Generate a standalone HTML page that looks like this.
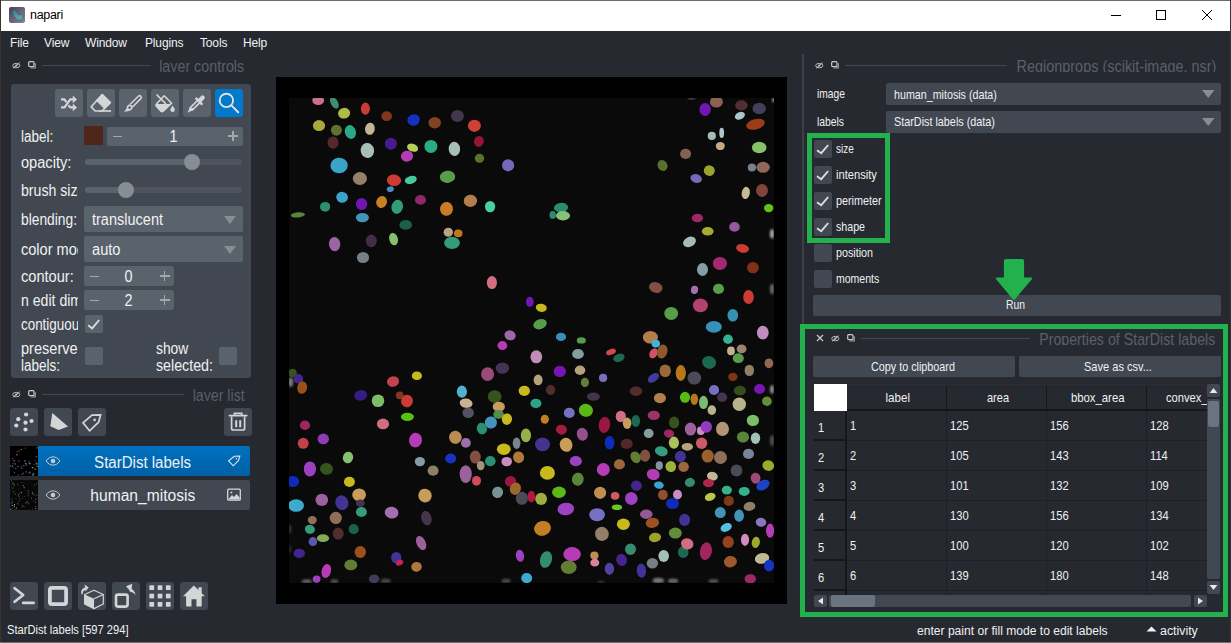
<!DOCTYPE html>
<html><head><meta charset="utf-8"><title>napari</title>
<style>
*{box-sizing:border-box;margin:0;padding:0}
html,body{width:1231px;height:643px;overflow:hidden;background:#262930}
body{font-family:"Liberation Sans",sans-serif;color:#f0f1f2;position:relative}
.abs,.abs>*{position:absolute}
#win div,#win span,#win svg{position:absolute}
.t{white-space:nowrap;line-height:1}
.lbl{font-size:15px;letter-spacing:-0.5px;color:#f0f1f2;left:21px;overflow:hidden;white-space:nowrap;height:20px;line-height:20px}
.btn{background:#414851;border-radius:3px;width:28px;height:28px}
.dk{color:#5f6670;font-size:15.5px;letter-spacing:-0.45px;white-space:nowrap;overflow:hidden;height:15px;line-height:17px;text-align:right}
.ln{height:1px;background:#414851}
.spin{background:#5a626c;border-radius:2px}
.cb{width:18px;height:18px;background:#5a626c;border-radius:2px}
.combo{background:#5a626c;border-radius:2px;font-size:15px;letter-spacing:-0.4px;line-height:26px;height:26px;padding-left:8px;white-space:nowrap}
.s12{font-size:12.5px;letter-spacing:-0.35px;white-space:nowrap;line-height:16px;height:16px}
.rcombo{background:#414851;border-radius:2px;height:22px;line-height:22px;padding-left:7px}
.rbtn{background:#414851;border-radius:2px;height:20px;line-height:20px;text-align:center}
.rcb{width:18px;height:18px;background:#414851;border-radius:2px}
.hd{background:#262930;border-right:2px solid #16181c;border-bottom:2px solid #16181c;height:27px;line-height:25px;text-align:center;width:100px;top:384px}
.rh{background:#262930;border-right:2px solid #16181c;border-bottom:2px solid #16181c;left:814px;width:33px;height:30px;line-height:32px;padding-left:4px}
.cell{height:30px;width:100px;border-right:1px solid #1d1f24;border-bottom:1px solid #1d1f24;line-height:27px;padding-left:4px}
</style></head><body><div id="win" style="left:0;top:0;width:1231px;height:643px;overflow:hidden">

<!-- window frame + title bar -->
<div style="left:0;top:0;width:1231px;height:1px;background:#6b6b6b"></div>
<div style="left:1px;top:1px;width:1229px;height:30px;background:#fff"></div>
<div style="left:0;top:0;width:1px;height:643px;background:#3a342e"></div>
<div style="left:1230px;top:0;width:1px;height:643px;background:#33363b"></div>
<div style="left:0;top:642px;width:1231px;height:1px;background:#6f7174"></div>
<svg style="left:9px;top:7px" width="16" height="16" viewBox="0 0 16 16"><defs><linearGradient id="lg" x1="0" y1="0" x2="1" y2="1"><stop offset="0" stop-color="#4a3f5c"/><stop offset="1" stop-color="#8b829a"/></linearGradient><linearGradient id="lg2" x1="0" y1="0" x2="1" y2="1"><stop offset="0" stop-color="#2e7f86"/><stop offset="1" stop-color="#6fb5b0"/></linearGradient></defs><rect x="0" y="0" width="16" height="16" rx="2" fill="url(#lg)"/><path d="M4.2 3.2 C6.3 2.3 7.8 4.2 8.3 6.2 C8.8 8 10.2 8 11.8 7.6 C13.6 7.4 14.2 9.4 13.4 11.2 C12.4 13.4 9.6 13.8 7.6 12.4 C5.6 11 4.2 8.6 3.6 6.4 C3.2 4.9 3.2 3.7 4.2 3.2Z" fill="url(#lg2)" stroke="#2b5d63" stroke-width="0.6"/></svg>
<div class="t" style="left:30px;top:8px;font-size:12.5px;letter-spacing:-0.3px;color:#000;line-height:15px">napari</div>
<svg style="left:1105px;top:5px" width="120" height="22" viewBox="0 0 120 22" fill="none" stroke="#000" stroke-width="1"><path d="M6 10.5H16"/><rect x="51.5" y="5.5" width="9" height="9"/><path d="M97 5L107 15M107 5L97 15"/></svg>
<!-- menu bar -->
<div class="t mn" style="left:10px;top:36px;font-size:12px;letter-spacing:-0.15px;line-height:14px">File</div>
<div class="t mn" style="left:44px;top:36px;font-size:12px;letter-spacing:-0.15px;line-height:14px">View</div>
<div class="t mn" style="left:85px;top:36px;font-size:12px;letter-spacing:-0.15px;line-height:14px">Window</div>
<div class="t mn" style="left:145px;top:36px;font-size:12px;letter-spacing:-0.15px;line-height:14px">Plugins</div>
<div class="t mn" style="left:200px;top:36px;font-size:12px;letter-spacing:-0.15px;line-height:14px">Tools</div>
<div class="t mn" style="left:243px;top:36px;font-size:12px;letter-spacing:-0.15px;line-height:14px">Help</div>

<svg style="left:12px;top:62px" width="9" height="7" viewBox="0 0 9 7"><ellipse cx="4.3" cy="3.6" rx="3.6" ry="2.2" fill="none" stroke="#b9babd" stroke-width="1"/><circle cx="4.3" cy="3.6" r="1.1" fill="#d0d1d3"/><path d="M1 6.3L7.8 0.6" stroke="#c8c9cb" stroke-width="0.9"/></svg><svg style="left:28px;top:61px" width="9" height="8" viewBox="0 0 9 8"><rect x="0.7" y="0.7" width="5.3" height="5" rx="1" fill="none" stroke="#c8c9cb" stroke-width="1.2"/><path d="M7.3 2.2V7H2.5" stroke="#9b9da1" stroke-width="1.2" fill="none"/></svg>
<div style="left:42px;top:65px;width:109px;height:1px;background:#414851;"></div>
<div style="left:150px;top:56px;width:100px;height:16.2px;overflow:hidden"><div class="t" style="right:5.5px;top:2.5px;font-size:16px;color:#59606b;transform:scaleX(0.893);transform-origin:100% 0;">layer controls</div></div>
<div style="left:11px;top:84px;width:240px;height:294px;background:#414851;border-radius:3px"></div>
<div style="left:55px;top:89px;width:28px;height:28px;background:#5a626c;border-radius:3px"></div>
<div style="left:87px;top:89px;width:28px;height:28px;background:#5a626c;border-radius:3px"></div>
<div style="left:119px;top:89px;width:28px;height:28px;background:#5a626c;border-radius:3px"></div>
<div style="left:151px;top:89px;width:28px;height:28px;background:#5a626c;border-radius:3px"></div>
<div style="left:183px;top:89px;width:28px;height:28px;background:#5a626c;border-radius:3px"></div>
<div style="left:215px;top:89px;width:28px;height:28px;background:#007acc;border-radius:3px"></div>
<svg style="left:55px;top:89px" width="28" height="28" viewBox="0 0 28 28"><g fill="none" stroke="#d4d5d7" stroke-width="2.3" stroke-linejoin="round"><path d="M6 10.4H9.4L11.4 13.2M13.6 16.2L15.2 18.4H19"/><path d="M6 18.4H9.6L15.2 10.4H19"/></g><path d="M17.8 6.6L22 10.4L17.8 14.2Z M17.8 14.6L22 18.4L17.8 22.2Z" fill="#d4d5d7"/></svg>
<svg style="left:87px;top:89px" width="28" height="28" viewBox="0 0 28 28"><path d="M15.3 5.6L23.3 13.6L15 22H8.2L4.2 17.8Z" fill="none" stroke="#d4d5d7" stroke-width="1.7" stroke-linejoin="round"/><path d="M15.3 5.6L23.3 13.6L17.6 19.3L9.6 11.3Z" fill="#d4d5d7" stroke="#d4d5d7" stroke-width="1.2" stroke-linejoin="round"/><path d="M12 22H24" stroke="#d4d5d7" stroke-width="1.7"/></svg>
<svg style="left:119px;top:89px" width="28" height="28" viewBox="0 0 28 28"><path d="M11.2 15.2L19.4 7.2A1.6 1.6 0 0 1 21.8 9.6L13.8 17.8" fill="none" stroke="#d4d5d7" stroke-width="1.6" stroke-linejoin="round"/><path d="M10.8 15.2C8.6 15.4 7.6 17 7.6 19C7.4 20.6 6 21.6 4.6 22.2C7.8 22.8 11.8 22.4 13.4 19.8C14.2 18.4 13.8 17.2 13.6 16.8Z" fill="#d4d5d7"/><circle cx="10.6" cy="18.6" r="1.3" fill="#5a626c"/></svg>
<svg style="left:151px;top:89px" width="28" height="28" viewBox="0 0 28 28"><path d="M6 6L14.5 14.5" stroke="#d4d5d7" stroke-width="1.7" stroke-linecap="round"/><path d="M13.2 6.8L20.6 14.2L12.2 22.2C11.4 22.8 10.6 22.8 10 22.2L5.4 17.2C4.8 16.4 4.8 15.6 5.4 15Z" fill="none" stroke="#d4d5d7" stroke-width="1.6" stroke-linejoin="round"/><path d="M5.2 15H20L12.2 22.4C11.4 22.9 10.6 22.9 10 22.3L5.4 17.3C4.8 16.5 4.8 15.7 5.2 15Z" fill="#d4d5d7"/><path d="M21.6 16.6C22.6 18.2 23.8 19.4 23.8 20.7A2.2 2.2 0 0 1 19.4 20.7C19.4 19.4 20.6 18.2 21.6 16.6Z" fill="#d4d5d7"/></svg>
<svg style="left:183px;top:89px" width="28" height="28" viewBox="0 0 28 28"><path d="M15.2 10.4L17.8 13L9.6 21.2L6.4 22L5.6 22.8L5.4 22.6L6.2 21.6L7 18.6Z" fill="#d4d5d7" stroke="#d4d5d7" stroke-width="1.2" stroke-linejoin="round"/><path d="M15.6 11.6L16.6 12.6L10.2 19H8.2Z" fill="#5a626c"/><path d="M13.4 9.6L18.6 14.8" stroke="#d4d5d7" stroke-width="2.6" stroke-linecap="round"/><path d="M17 11.2L19.6 8.6" stroke="#d4d5d7" stroke-width="4.4" stroke-linecap="round"/></svg>
<svg style="left:215px;top:89px" width="28" height="28" viewBox="0 0 28 28"><circle cx="11.4" cy="11.4" r="6.7" fill="none" stroke="#e4e0dc" stroke-width="1.9"/><path d="M16.4 16.4L23.2 23.2" stroke="#e4e0dc" stroke-width="2" stroke-linecap="round"/></svg>
<div style="left:21px;top:126.69999999999999px;width:57px;height:22px;overflow:hidden"><div class="t" style="left:0.0px;top:2.5px;font-size:16px;color:#f0f1f2;transform:scaleX(0.844);transform-origin:0 0;">label:</div></div>
<div style="left:84px;top:126px;width:19px;height:19px;background:#4f261a;"></div>
<div style="left:107px;top:127px;width:136px;height:19px;background:#5a626c;border-radius:2px"></div>
<div style="left:113px;top:135.5px;width:9px;height:1.3px;background:#a4a8ad;"></div><div style="left:228.0px;top:135.4px;width:10px;height:1.3px;background:#a4a8ad;"></div><div style="left:232.3px;top:131px;width:1.3px;height:10px;background:#a4a8ad;"></div>
<div class="t" style="left:169.1px;top:129.2px;font-size:16px;color:#f0f1f2;transform:scaleX(0.900);transform-origin:50% 0;">1</div>
<div style="left:21px;top:152.8px;width:57px;height:22px;overflow:hidden"><div class="t" style="left:0.0px;top:2.5px;font-size:16px;color:#f0f1f2;transform:scaleX(0.912);transform-origin:0 0;">opacity:</div></div>
<div style="left:85px;top:159px;width:157px;height:6px;background:#4d545e;border-radius:3px"></div><div style="left:85px;top:159px;width:107px;height:6px;background:#5a626c;border-radius:3px"></div><div style="left:184px;top:154px;width:16px;height:16px;background:#868e93;border-radius:8px"></div>
<div style="left:21px;top:180.7px;width:57px;height:22px;overflow:hidden"><div class="t" style="left:0.0px;top:2.5px;font-size:16px;color:#f0f1f2;transform:scaleX(0.883);transform-origin:0 0;">brush size:</div></div>
<div style="left:85px;top:187px;width:157px;height:6px;background:#4d545e;border-radius:3px"></div><div style="left:85px;top:187px;width:41px;height:6px;background:#5a626c;border-radius:3px"></div><div style="left:118px;top:182px;width:16px;height:16px;background:#868e93;border-radius:8px"></div>
<div style="left:21px;top:209.8px;width:57px;height:22px;overflow:hidden"><div class="t" style="left:0.0px;top:2.5px;font-size:16px;color:#f0f1f2;transform:scaleX(0.862);transform-origin:0 0;">blending:</div></div>
<div style="left:84px;top:206px;width:159px;height:26px;background:#5a626c;border-radius:2px"></div>
<div class="t" style="left:92.0px;top:212.3px;font-size:16px;color:#f0f1f2;transform:scaleX(0.907);transform-origin:0 0;">translucent</div>
<div style="left:21px;top:239.8px;width:57px;height:22px;overflow:hidden"><div class="t" style="left:0.0px;top:2.5px;font-size:16px;color:#f0f1f2;transform:scaleX(0.909);transform-origin:0 0;">color mode:</div></div>
<div style="left:84px;top:236px;width:159px;height:26px;background:#5a626c;border-radius:2px"></div>
<div class="t" style="left:92.0px;top:242.3px;font-size:16px;color:#f0f1f2;transform:scaleX(0.915);transform-origin:0 0;">auto</div>
<svg style="left:224px;top:215.5px" width="12" height="8" viewBox="0 0 12 8"><path d="M0 0H12L6.0 8Z" fill="#868e93"/></svg>
<svg style="left:224px;top:245.5px" width="12" height="8" viewBox="0 0 12 8"><path d="M0 0H12L6.0 8Z" fill="#868e93"/></svg>
<div style="left:21px;top:266.8px;width:57px;height:22px;overflow:hidden"><div class="t" style="left:0.0px;top:2.5px;font-size:16px;color:#f0f1f2;transform:scaleX(0.913);transform-origin:0 0;">contour:</div></div>
<div style="left:84px;top:266px;width:90px;height:20px;background:#5a626c;border-radius:2px"></div>
<div style="left:89.5px;top:275.5px;width:9px;height:1.3px;background:#a4a8ad;"></div><div style="left:159.8px;top:275.4px;width:10px;height:1.3px;background:#a4a8ad;"></div><div style="left:164.10000000000002px;top:271px;width:1.3px;height:10px;background:#a4a8ad;"></div>
<div class="t" style="left:123.6px;top:269.3px;font-size:16px;color:#f0f1f2;transform:scaleX(0.900);transform-origin:50% 0;">0</div>
<div style="left:21px;top:290.8px;width:57px;height:22px;overflow:hidden"><div class="t" style="left:0.0px;top:2.5px;font-size:16px;color:#f0f1f2;transform:scaleX(0.881);transform-origin:0 0;">n edit dim:</div></div>
<div style="left:84px;top:290px;width:90px;height:20px;background:#5a626c;border-radius:2px"></div>
<div style="left:89.5px;top:299.5px;width:9px;height:1.3px;background:#a4a8ad;"></div><div style="left:159.8px;top:299.4px;width:10px;height:1.3px;background:#a4a8ad;"></div><div style="left:164.10000000000002px;top:295px;width:1.3px;height:10px;background:#a4a8ad;"></div>
<div class="t" style="left:123.6px;top:293.3px;font-size:16px;color:#f0f1f2;transform:scaleX(0.900);transform-origin:50% 0;">2</div>
<div style="left:21px;top:314.7px;width:57px;height:22px;overflow:hidden"><div class="t" style="left:0.0px;top:2.5px;font-size:16px;color:#f0f1f2;transform:scaleX(0.838);transform-origin:0 0;">contiguous:</div></div>
<div style="left:85px;top:315px;width:18px;height:18px;background:#5a626c;border-radius:2px"></div>
<svg style="left:85px;top:315px" width="18" height="18" viewBox="0 0 18 18"><path d="M3.2 10.2L7.2 13.4L14.2 5" fill="none" stroke="#dcdddf" stroke-width="1.9"/></svg>
<div style="left:21px;top:338.0px;width:57px;height:22px;overflow:hidden"><div class="t" style="left:0.0px;top:2.5px;font-size:16px;color:#f0f1f2;transform:scaleX(0.909);transform-origin:0 0;">preserve</div></div>
<div style="left:21px;top:355.2px;width:57px;height:22px;overflow:hidden"><div class="t" style="left:0.0px;top:2.5px;font-size:16px;color:#f0f1f2;transform:scaleX(0.843);transform-origin:0 0;">labels:</div></div>
<div style="left:85px;top:347px;width:18px;height:18px;background:#5a626c;border-radius:2px"></div>
<div class="t" style="left:156.0px;top:340.5px;font-size:16px;color:#f0f1f2;transform:scaleX(0.865);transform-origin:0 0;">show</div>
<div class="t" style="left:156.0px;top:357.7px;font-size:16px;color:#f0f1f2;transform:scaleX(0.890);transform-origin:0 0;">selected:</div>
<div style="left:219px;top:347px;width:18px;height:18px;background:#5a626c;border-radius:2px"></div>
<svg style="left:12px;top:391px" width="9" height="7" viewBox="0 0 9 7"><ellipse cx="4.3" cy="3.6" rx="3.6" ry="2.2" fill="none" stroke="#b9babd" stroke-width="1"/><circle cx="4.3" cy="3.6" r="1.1" fill="#d0d1d3"/><path d="M1 6.3L7.8 0.6" stroke="#c8c9cb" stroke-width="0.9"/></svg><svg style="left:28px;top:390px" width="9" height="8" viewBox="0 0 9 8"><rect x="0.7" y="0.7" width="5.3" height="5" rx="1" fill="none" stroke="#c8c9cb" stroke-width="1.2"/><path d="M7.3 2.2V7H2.5" stroke="#9b9da1" stroke-width="1.2" fill="none"/></svg>
<div style="left:42px;top:394px;width:142px;height:1px;background:#414851;"></div>
<div style="left:150px;top:385px;width:100px;height:16.2px;overflow:hidden"><div class="t" style="right:5.4px;top:3.0px;font-size:16px;color:#59606b;transform:scaleX(0.886);transform-origin:100% 0;">layer list</div></div>
<div style="left:10px;top:408px;width:28px;height:28px;background:#414851;border-radius:3px"></div>
<div style="left:44px;top:408px;width:28px;height:28px;background:#414851;border-radius:3px"></div>
<div style="left:78px;top:408px;width:28px;height:28px;background:#414851;border-radius:3px"></div>
<div style="left:224px;top:408px;width:28px;height:28px;background:#414851;border-radius:3px"></div>
<svg style="left:10px;top:408px" width="28" height="28" viewBox="0 0 28 28"><circle cx="16.1" cy="6.5" r="2.1" fill="#d4d5d7"/><circle cx="8.3" cy="11.2" r="2.1" fill="#d4d5d7"/><circle cx="21.5" cy="13" r="2.1" fill="#d4d5d7"/><circle cx="15.5" cy="14.7" r="2.1" fill="#d4d5d7"/><circle cx="6.3" cy="17.5" r="2.1" fill="#d4d5d7"/><circle cx="15.5" cy="21.5" r="2.1" fill="#d4d5d7"/></svg>
<svg style="left:44px;top:408px" width="28" height="28" viewBox="0 0 28 28"><path d="M8.3 4.9L24 18.6L14.6 22L6.3 18.3Z" fill="#d4d5d7"/></svg>
<svg style="left:78px;top:408px" width="28" height="28" viewBox="0 0 28 28"><path d="M22.6 7L20.6 14.2L11.6 22.8L5 14.8L14 7.2Z" fill="none" stroke="#d4d5d7" stroke-width="1.7" stroke-linejoin="miter"/><circle cx="16.6" cy="11.9" r="1.3" fill="#d4d5d7"/></svg>
<svg style="left:224px;top:408px" width="28" height="28" viewBox="0 0 28 28"><path d="M5.4 7.6H22.8" stroke="#d4d5d7" stroke-width="1.7" stroke-linecap="round"/><path d="M10.4 7V5.4H17.8V7" stroke="#d4d5d7" stroke-width="1.6" fill="none"/><path d="M7.6 8.5V20.2C7.6 21.4 8.4 22 9.4 22H18.8C19.8 22 20.6 21.4 20.6 20.2V8.5" stroke="#d4d5d7" stroke-width="1.7" fill="none"/><path d="M12.2 12.2V19.2M16.2 12.2V19.2" stroke="#d4d5d7" stroke-width="2"/></svg>
<div style="left:10px;top:446px;width:240px;height:30px;background:linear-gradient(#0071c0,#0060a6);border-radius:2px"></div>
<div style="left:10px;top:480px;width:240px;height:30px;background:#414851;border-radius:2px"></div>
<div style="left:10px;top:446px;width:28px;height:30px;background:#000;"></div>
<div style="left:10px;top:480px;width:28px;height:30px;background:#080808;"></div>
<svg style="left:10px;top:446px" width="28" height="30" viewBox="0 0 28 30"><rect x="8.7" y="4.4" width="1" height="1" fill="#70c050" opacity="0.8"/><rect x="2.5" y="16.9" width="1" height="1" fill="#d05050" opacity="0.8"/><rect x="2.3" y="12.1" width="1" height="1" fill="#50c070" opacity="0.8"/><rect x="14.9" y="1.7" width="1" height="1" fill="#c06090" opacity="0.8"/><rect x="25.6" y="16.7" width="2" height="1" fill="#d05050" opacity="0.8"/><rect x="26.4" y="1.4" width="1.5" height="1" fill="#d08040" opacity="0.8"/><rect x="3.9" y="26.2" width="1" height="1" fill="#50c070" opacity="0.8"/><rect x="15.7" y="18.5" width="1.5" height="1" fill="#50c070" opacity="0.8"/><rect x="14.8" y="17.1" width="2" height="1" fill="#40b0b0" opacity="0.8"/><rect x="12.6" y="26.8" width="1.5" height="1" fill="#b050c0" opacity="0.8"/><rect x="6.7" y="5.2" width="1" height="1" fill="#c06090" opacity="0.8"/><rect x="8.1" y="14.4" width="1.5" height="1" fill="#9060d0" opacity="0.8"/><rect x="7.8" y="28.4" width="1" height="1" fill="#70c050" opacity="0.8"/><rect x="11.3" y="22.0" width="1" height="1" fill="#9060d0" opacity="0.8"/><rect x="11.4" y="27.9" width="1" height="1" fill="#70c050" opacity="0.8"/><rect x="15.5" y="25.4" width="1.5" height="1" fill="#40b0b0" opacity="0.8"/><rect x="18.8" y="17.2" width="2" height="1" fill="#50c070" opacity="0.8"/><rect x="22.7" y="27.4" width="2" height="1" fill="#50c070" opacity="0.8"/><rect x="1.6" y="20.3" width="2" height="1" fill="#b050c0" opacity="0.8"/><rect x="19.3" y="25.7" width="1.5" height="1" fill="#d05050" opacity="0.8"/><rect x="25.4" y="10.3" width="2" height="1" fill="#d05050" opacity="0.8"/><rect x="5.9" y="8.3" width="2" height="1" fill="#d08040" opacity="0.8"/><rect x="24.8" y="14.4" width="1" height="1" fill="#9060d0" opacity="0.8"/><rect x="10.8" y="20.5" width="1.5" height="1" fill="#d08040" opacity="0.8"/><rect x="26.6" y="19.8" width="2" height="1" fill="#c0c040" opacity="0.8"/><rect x="4.1" y="17.5" width="2" height="1" fill="#c06090" opacity="0.8"/><rect x="4.9" y="22.0" width="1.5" height="1" fill="#5080d0" opacity="0.8"/><rect x="18.6" y="14.9" width="1" height="1" fill="#9060d0" opacity="0.8"/><rect x="24.3" y="22.6" width="2" height="1" fill="#d08040" opacity="0.8"/><rect x="10.8" y="3.0" width="1" height="1" fill="#c0c040" opacity="0.8"/><rect x="1.8" y="19.1" width="1" height="1" fill="#50c070" opacity="0.8"/><rect x="0.0" y="19.5" width="1" height="1" fill="#50c070" opacity="0.8"/><rect x="23.6" y="17.8" width="1" height="1" fill="#b050c0" opacity="0.8"/><rect x="25.8" y="17.5" width="2" height="1" fill="#50c070" opacity="0.8"/><rect x="3.1" y="14.2" width="2" height="1" fill="#9060d0" opacity="0.8"/><rect x="13.1" y="19.1" width="1.5" height="1" fill="#9060d0" opacity="0.8"/><rect x="22.4" y="28.3" width="1.5" height="1" fill="#5080d0" opacity="0.8"/><rect x="18.6" y="26.5" width="1.5" height="1" fill="#50c070" opacity="0.8"/><rect x="18.8" y="16.5" width="1" height="1" fill="#70c050" opacity="0.8"/><rect x="14.6" y="14.6" width="1" height="1" fill="#c06090" opacity="0.8"/><rect x="21.9" y="28.6" width="1" height="1" fill="#c0c040" opacity="0.8"/><rect x="22.1" y="21.5" width="1" height="1" fill="#c0c040" opacity="0.8"/><rect x="14.0" y="14.4" width="1.5" height="1" fill="#9060d0" opacity="0.8"/><rect x="7.0" y="20.1" width="1.5" height="1" fill="#9060d0" opacity="0.8"/><rect x="21.8" y="21.0" width="1.5" height="1" fill="#40b0b0" opacity="0.8"/></svg>
<svg style="left:10px;top:480px" width="28" height="30" viewBox="0 0 28 30"><rect x="2.2" y="3.0" width="1" height="1" fill="#888"/><rect x="5.5" y="18.1" width="1" height="1" fill="#333"/><rect x="22.7" y="13.9" width="1" height="1" fill="#555"/><rect x="9.3" y="18.7" width="1" height="1" fill="#555"/><rect x="3.2" y="11.3" width="1" height="1" fill="#666"/><rect x="12.9" y="5.2" width="1" height="1" fill="#888"/><rect x="2.3" y="27.4" width="1" height="1" fill="#555"/><rect x="10.7" y="11.6" width="1" height="1" fill="#555"/><rect x="4.3" y="28.8" width="1" height="1" fill="#444"/><rect x="4.1" y="26.2" width="1" height="1" fill="#555"/><rect x="3.9" y="24.0" width="1" height="1" fill="#aaa"/><rect x="17.7" y="10.2" width="1" height="1" fill="#666"/><rect x="0.6" y="23.2" width="1" height="1" fill="#555"/><rect x="17.5" y="15.3" width="1" height="1" fill="#666"/><rect x="11.7" y="25.3" width="1" height="1" fill="#666"/><rect x="0.8" y="6.2" width="1" height="1" fill="#333"/><rect x="8.8" y="15.8" width="1" height="1" fill="#666"/><rect x="1.6" y="21.5" width="1" height="1" fill="#aaa"/><rect x="17.9" y="23.6" width="1" height="1" fill="#333"/><rect x="11.4" y="26.6" width="1" height="1" fill="#333"/><rect x="3.5" y="4.4" width="1" height="1" fill="#aaa"/><rect x="21.0" y="17.6" width="1" height="1" fill="#666"/><rect x="4.7" y="13.7" width="1" height="1" fill="#555"/><rect x="3.2" y="1.8" width="1" height="1" fill="#333"/><rect x="15.0" y="22.7" width="1" height="1" fill="#444"/><rect x="23.8" y="14.6" width="1" height="1" fill="#444"/><rect x="13.7" y="16.3" width="1" height="1" fill="#444"/><rect x="12.0" y="17.8" width="1" height="1" fill="#333"/><rect x="16.4" y="21.6" width="1" height="1" fill="#aaa"/><rect x="13.7" y="7.2" width="1" height="1" fill="#888"/><rect x="24.9" y="25.9" width="1" height="1" fill="#666"/><rect x="22.7" y="20.6" width="1" height="1" fill="#444"/><rect x="18.1" y="12.4" width="1" height="1" fill="#666"/><rect x="18.1" y="22.7" width="1" height="1" fill="#666"/><rect x="25.4" y="18.7" width="1" height="1" fill="#888"/><rect x="3.9" y="25.6" width="1" height="1" fill="#aaa"/><rect x="5.9" y="27.6" width="1" height="1" fill="#aaa"/><rect x="23.9" y="4.7" width="1" height="1" fill="#666"/><rect x="4.4" y="12.5" width="1" height="1" fill="#333"/><rect x="10.9" y="12.2" width="1" height="1" fill="#888"/><rect x="8.6" y="20.9" width="1" height="1" fill="#444"/><rect x="9.1" y="13.3" width="1" height="1" fill="#555"/><rect x="0.5" y="9.6" width="1" height="1" fill="#333"/><rect x="25.9" y="3.3" width="1" height="1" fill="#666"/><rect x="26.2" y="14.6" width="1" height="1" fill="#666"/><rect x="7.3" y="3.8" width="1" height="1" fill="#555"/><rect x="22.1" y="27.8" width="1" height="1" fill="#333"/><rect x="13.4" y="26.0" width="1" height="1" fill="#666"/><rect x="11.5" y="2.1" width="1" height="1" fill="#555"/><rect x="2.4" y="7.6" width="1" height="1" fill="#666"/><rect x="1.8" y="25.0" width="1" height="1" fill="#aaa"/><rect x="0.3" y="28.8" width="1" height="1" fill="#aaa"/><rect x="25.0" y="21.9" width="1" height="1" fill="#666"/><rect x="25.3" y="28.1" width="1" height="1" fill="#888"/><rect x="1.4" y="18.6" width="1" height="1" fill="#666"/><rect x="7.8" y="14.5" width="1" height="1" fill="#666"/><rect x="7.3" y="23.3" width="1" height="1" fill="#888"/><rect x="1.0" y="0.5" width="1" height="1" fill="#666"/><rect x="13.9" y="7.1" width="1" height="1" fill="#555"/><rect x="22.1" y="12.5" width="1" height="1" fill="#aaa"/></svg>
<svg style="left:45px;top:455px" width="16" height="12" viewBox="0 0 16 12"><path d="M1.2 6C3 3 5.4 1.9 8 1.9C10.6 1.9 13 3 14.8 6C13 9 10.6 10.1 8 10.1C5.4 10.1 3 9 1.2 6Z" fill="none" stroke="#c9cacc" stroke-width="1"/><circle cx="8" cy="6" r="2.3" fill="#c9cacc"/></svg>
<svg style="left:45px;top:489px" width="16" height="12" viewBox="0 0 16 12"><path d="M1.2 6C3 3 5.4 1.9 8 1.9C10.6 1.9 13 3 14.8 6C13 9 10.6 10.1 8 10.1C5.4 10.1 3 9 1.2 6Z" fill="none" stroke="#c9cacc" stroke-width="1"/><circle cx="8" cy="6" r="2.3" fill="#c9cacc"/></svg>
<div class="t" style="left:91.4px;top:454.5px;font-size:16px;color:#f0f1f2;transform:scaleX(0.940);transform-origin:50% 0;">StarDist labels</div>
<div class="t" style="left:89.2px;top:488.3px;font-size:16px;color:#f0f1f2;transform:scaleX(0.976);transform-origin:50% 0;">human_mitosis</div>
<svg style="left:227px;top:454px" width="14" height="14" viewBox="0 0 14 14"><path d="M12.8 2L11.6 6.4L6.2 11.8L1.6 6.8L7.4 2.2Z" fill="none" stroke="#e6e6e6" stroke-width="1.1"/><circle cx="9.4" cy="4.8" r="0.8" fill="#e6e6e6"/></svg>
<svg style="left:227px;top:488px" width="14" height="14" viewBox="0 0 14 14"><rect x="0.7" y="1.2" width="12.6" height="11" rx="1" fill="none" stroke="#d4d5d7" stroke-width="1.3"/><path d="M1.5 11L5 7L7 9L9.6 6L12.6 9.4V11.4H1.5Z" fill="#d4d5d7"/><circle cx="4.4" cy="4.4" r="1" fill="#d4d5d7"/></svg>
<div style="left:10px;top:582px;width:28px;height:28px;background:#414851;border-radius:3px"></div>
<div style="left:44px;top:582px;width:28px;height:28px;background:#414851;border-radius:3px"></div>
<div style="left:78px;top:582px;width:28px;height:28px;background:#414851;border-radius:3px"></div>
<div style="left:112px;top:582px;width:28px;height:28px;background:#414851;border-radius:3px"></div>
<div style="left:146px;top:582px;width:28px;height:28px;background:#414851;border-radius:3px"></div>
<div style="left:180px;top:582px;width:28px;height:28px;background:#414851;border-radius:3px"></div>
<svg style="left:10px;top:582px" width="28" height="28" viewBox="0 0 28 28"><path d="M4.6 6.2L13.2 13L4.6 19.8" fill="none" stroke="#d4d5d7" stroke-width="2.7" stroke-linecap="round" stroke-linejoin="round"/><path d="M13.2 20.9H23.6" stroke="#d4d5d7" stroke-width="2.7" stroke-linecap="round"/></svg>
<svg style="left:44px;top:582px" width="28" height="28" viewBox="0 0 28 28"><rect x="5.9" y="5.9" width="16.2" height="16.2" rx="2" fill="none" stroke="#d4d5d7" stroke-width="3.8"/></svg>
<svg style="left:78px;top:582px" width="28" height="28" viewBox="0 0 28 28"><path d="M16 8.3L25.3 12.5V22L16 26.6L6.6 22V12.5Z" fill="none" stroke="#d4d5d7" stroke-width="1.2" stroke-linejoin="round"/><path d="M6.6 12.5L16 16.8V26.6L6.6 22Z" fill="#d4d5d7"/><path d="M16 16.8L25.3 12.5" stroke="#d4d5d7" stroke-width="1.2"/><path d="M3.6 12.4C2.4 9 4.2 6.2 7.6 5.6L7.8 7.8C5.6 8.4 4.6 10 4.8 12Z" fill="#d4d5d7"/><path d="M6.6 2.6L10.6 5.6L7.6 9.6Z" fill="#d4d5d7"/></svg>
<svg style="left:112px;top:582px" width="28" height="28" viewBox="0 0 28 28"><rect x="4" y="12.6" width="11.6" height="12" rx="2" fill="none" stroke="#d4d5d7" stroke-width="2.6"/><path d="M23.6 13.2C23.2 9.4 21 7 18.4 6.2L17.4 9.2C20 10 22.4 11 23.6 13.2Z" fill="#d4d5d7"/><path d="M14 4.2L20.2 1.8L19.2 10.2Z" fill="#d4d5d7"/></svg>
<svg style="left:146px;top:582px" width="28" height="28" viewBox="0 0 28 28"><rect x="3.4" y="3.3" width="4.7" height="4.7" fill="#d4d5d7"/><rect x="11.7" y="3.3" width="4.7" height="4.7" fill="#d4d5d7"/><rect x="19.9" y="3.3" width="4.7" height="4.7" fill="#d4d5d7"/><rect x="3.4" y="11.7" width="4.7" height="4.7" fill="#d4d5d7"/><rect x="11.7" y="11.7" width="4.7" height="4.7" fill="#d4d5d7"/><rect x="19.9" y="11.7" width="4.7" height="4.7" fill="#d4d5d7"/><rect x="3.4" y="20" width="4.7" height="4.7" fill="#d4d5d7"/><rect x="11.7" y="20" width="4.7" height="4.7" fill="#d4d5d7"/><rect x="19.9" y="20" width="4.7" height="4.7" fill="#d4d5d7"/></svg>
<svg style="left:180px;top:582px" width="28" height="28" viewBox="0 0 28 28"><path d="M13.8 3.4L18.5 8V5.3H21.7V11.2L24.8 14.2H21.7V23.6C21.7 24.2 21.3 24.6 20.8 24.6H16.4V17.2H11.5V24.6H7C6.5 24.6 6.1 24.2 6.1 23.6V14.2H3L13.8 3.4Z" fill="#d4d5d7"/></svg>
<div class="t" style="left:7.4px;top:623.5px;font-size:12px;color:#f0f1f2;transform:scaleX(0.930);transform-origin:0 0;">StarDist labels [597 294]</div>
<div style="left:276px;top:77px;width:511px;height:527px;background:#000;"></div>
<svg style="left:289px;top:98px" width="485" height="485" viewBox="0 0 485 485"><defs><filter id="bl" x="-30%" y="-30%" width="160%" height="160%"><feGaussianBlur stdDeviation="0.9"/></filter></defs><rect width="485" height="485" fill="#0a0a0a"/><g opacity="0.93"><ellipse cx="29.2" cy="2.4" rx="5.9" ry="4.7" fill="#d9789a"/><ellipse cx="45.4" cy="4.9" rx="3.6" ry="6.3" fill="#3f9a7c" transform="rotate(-30 45.4 4.9)"/><ellipse cx="55.1" cy="15.2" rx="6.1" ry="5.3" fill="#bfc94a" transform="rotate(-10 55.1 15.2)"/><ellipse cx="76.4" cy="10.7" rx="4.5" ry="6.1" fill="#d8423c"/><ellipse cx="30.0" cy="27.6" rx="6.1" ry="5.5" fill="#b5b83e"/><ellipse cx="47.4" cy="32.2" rx="5.5" ry="5.5" fill="#677a36"/><ellipse cx="61.4" cy="34.0" rx="5.5" ry="7.1" fill="#2fb58e" transform="rotate(-15 61.4 34.0)"/><ellipse cx="80.9" cy="30.8" rx="4.9" ry="6.1" fill="#cfc6a0" transform="rotate(10 80.9 30.8)"/><ellipse cx="97.7" cy="18.2" rx="5.3" ry="4.9" fill="#8a3c1c"/><ellipse cx="124.6" cy="21.9" rx="6.3" ry="5.7" fill="#1535d0" transform="rotate(-15 124.6 21.9)"/><ellipse cx="145.7" cy="24.7" rx="6.3" ry="5.7" fill="#8a4a22"/><ellipse cx="168.4" cy="18.0" rx="6.5" ry="5.9" fill="#4a3b52"/><ellipse cx="185.4" cy="27.8" rx="6.5" ry="6.1" fill="#de463c"/><ellipse cx="44.0" cy="44.6" rx="5.5" ry="6.1" fill="#5e2a32"/><ellipse cx="78.4" cy="52.5" rx="6.7" ry="7.5" fill="#b5cdc6" transform="rotate(-10 78.4 52.5)"/><ellipse cx="101.9" cy="45.8" rx="6.1" ry="6.1" fill="#4a1f96"/><ellipse cx="123.6" cy="49.7" rx="5.7" ry="3.9" fill="#c9de5c" transform="rotate(20 123.6 49.7)"/><ellipse cx="118.0" cy="58.2" rx="6.1" ry="5.5" fill="#c440c4" transform="rotate(-10 118.0 58.2)"/><ellipse cx="141.9" cy="48.4" rx="6.5" ry="6.5" fill="#2fb892"/><ellipse cx="165.4" cy="50.9" rx="5.7" ry="7.1" fill="#b5cdc6" transform="rotate(-5 165.4 50.9)"/><ellipse cx="189.9" cy="43.4" rx="4.9" ry="5.5" fill="#a0183c" transform="rotate(20 189.9 43.4)"/><ellipse cx="190.5" cy="60.2" rx="4.7" ry="4.5" fill="#5f7a30"/><ellipse cx="219.1" cy="67.3" rx="6.1" ry="6.1" fill="#7f72c8"/><ellipse cx="50.1" cy="67.5" rx="8.7" ry="7.7" fill="#3fb0d8" transform="rotate(-5 50.1 67.5)"/><ellipse cx="70.9" cy="80.5" rx="7.1" ry="6.5" fill="#a08a70"/><ellipse cx="105.0" cy="82.3" rx="7.1" ry="5.7" fill="#dc403a" transform="rotate(5 105.0 82.3)"/><ellipse cx="121.8" cy="81.9" rx="6.1" ry="3.9" fill="#4fd8a8" transform="rotate(-15 121.8 81.9)"/><ellipse cx="101.3" cy="91.2" rx="3.6" ry="2.8" fill="#4a9ccc" transform="rotate(-10 101.3 91.2)"/><ellipse cx="158.5" cy="78.8" rx="7.7" ry="6.1" fill="#5faa50" transform="rotate(-5 158.5 78.8)"/><ellipse cx="53.1" cy="99.3" rx="5.9" ry="5.5" fill="#3fb0d8" transform="rotate(10 53.1 99.3)"/><ellipse cx="36.1" cy="108.8" rx="5.1" ry="4.9" fill="#2f9a7a"/><ellipse cx="72.6" cy="106.0" rx="5.7" ry="6.1" fill="#7a18c0"/><ellipse cx="92.6" cy="104.0" rx="5.3" ry="6.1" fill="#d88a28" transform="rotate(20 92.6 104.0)"/><ellipse cx="108.2" cy="108.8" rx="5.7" ry="7.1" fill="#3aa884" transform="rotate(15 108.2 108.8)"/><ellipse cx="131.5" cy="101.9" rx="5.5" ry="4.9" fill="#9a2c70"/><ellipse cx="157.5" cy="110.9" rx="6.5" ry="6.9" fill="#d8862a" transform="rotate(10 157.5 110.9)"/><ellipse cx="181.4" cy="102.8" rx="6.7" ry="6.1" fill="#c08850" transform="rotate(-10 181.4 102.8)"/><ellipse cx="201.1" cy="108.6" rx="5.1" ry="5.7" fill="#4fe0b0"/><ellipse cx="8.9" cy="116.9" rx="7.1" ry="2.6" fill="#5f9040" transform="rotate(-5 8.9 116.9)"/><ellipse cx="73.4" cy="119.6" rx="6.5" ry="4.7" fill="#4aa0c8"/><ellipse cx="427.4" cy="3.9" rx="6.5" ry="5.7" fill="#9a6858"/><ellipse cx="416.1" cy="11.4" rx="5.7" ry="6.5" fill="#7a18c0"/><ellipse cx="452.4" cy="7.3" rx="6.3" ry="5.1" fill="#5a3038"/><ellipse cx="470.2" cy="10.5" rx="6.7" ry="5.7" fill="#4a4560"/><ellipse cx="450.9" cy="17.8" rx="5.3" ry="3.6" fill="#b8d4d8" transform="rotate(-25 450.9 17.8)"/><ellipse cx="466.5" cy="26.3" rx="9.5" ry="5.1" fill="#a8401c" transform="rotate(-15 466.5 26.3)"/><ellipse cx="432.7" cy="34.9" rx="2.4" ry="5.1" fill="#c0d4d8"/><ellipse cx="422.8" cy="37.9" rx="4.1" ry="4.1" fill="#b0ccc8"/><ellipse cx="431.3" cy="48.0" rx="4.5" ry="4.1" fill="#d8b490"/><ellipse cx="396.6" cy="55.9" rx="5.5" ry="5.1" fill="#906858"/><ellipse cx="470.2" cy="49.5" rx="7.3" ry="5.7" fill="#8ed070"/><ellipse cx="373.5" cy="67.5" rx="4.9" ry="5.7" fill="#5f7a30" transform="rotate(-25 373.5 67.5)"/><ellipse cx="420.3" cy="72.6" rx="5.5" ry="5.3" fill="#a8b030" transform="rotate(10 420.3 72.6)"/><ellipse cx="407.2" cy="80.5" rx="5.9" ry="4.3" fill="#7f72c8" transform="rotate(15 407.2 80.5)"/><ellipse cx="462.9" cy="69.5" rx="4.1" ry="4.1" fill="#808a98"/><ellipse cx="474.1" cy="69.3" rx="6.7" ry="5.5" fill="#9a7060"/><ellipse cx="473.0" cy="92.4" rx="5.9" ry="6.5" fill="#8a4a40"/><ellipse cx="456.8" cy="94.9" rx="4.1" ry="6.1" fill="#d8c8a0" transform="rotate(10 456.8 94.9)"/><ellipse cx="479.7" cy="110.1" rx="4.7" ry="4.1" fill="#6ad020"/><ellipse cx="272.0" cy="109.6" rx="7.1" ry="4.7" fill="#2f9878" transform="rotate(-5 272.0 109.6)"/><ellipse cx="274.0" cy="117.8" rx="7.1" ry="4.7" fill="#90d080"/><ellipse cx="263.7" cy="116.9" rx="3.2" ry="3.9" fill="#2f9878"/><ellipse cx="408.4" cy="120.0" rx="5.7" ry="4.3" fill="#a82c70"/><ellipse cx="402.5" cy="0.2" rx="3.6" ry="1.0" fill="#777777" filter="url(#bl)"/><ellipse cx="484.6" cy="2.0" rx="1.6" ry="2.8" fill="#999999" filter="url(#bl)"/><ellipse cx="116.7" cy="126.9" rx="6.3" ry="4.9" fill="#1f6850"/><ellipse cx="45.6" cy="146.1" rx="5.7" ry="7.1" fill="#a86cb0" transform="rotate(-5 45.6 146.1)"/><ellipse cx="82.3" cy="142.9" rx="5.5" ry="6.3" fill="#4a3050"/><ellipse cx="104.6" cy="141.1" rx="4.3" ry="6.3" fill="#90d070" transform="rotate(-15 104.6 141.1)"/><ellipse cx="74.0" cy="159.5" rx="6.1" ry="5.5" fill="#808890"/><ellipse cx="159.3" cy="134.2" rx="4.7" ry="4.5" fill="#c8b090"/><ellipse cx="169.2" cy="135.4" rx="4.3" ry="3.8" fill="#d08020"/><ellipse cx="163.0" cy="144.9" rx="7.9" ry="6.1" fill="#3aa884"/><ellipse cx="202.9" cy="184.6" rx="5.1" ry="6.5" fill="#e0788c"/><ellipse cx="240.8" cy="203.9" rx="3.9" ry="5.1" fill="#7a18c0"/><ellipse cx="221.1" cy="237.3" rx="5.7" ry="4.9" fill="#a870b8" transform="rotate(20 221.1 237.3)"/><ellipse cx="445.5" cy="128.9" rx="5.3" ry="4.9" fill="#a060a8"/><ellipse cx="418.7" cy="133.3" rx="5.9" ry="4.3" fill="#b0b83a"/><ellipse cx="400.5" cy="143.9" rx="6.7" ry="4.9" fill="#b0ccc4" transform="rotate(-25 400.5 143.9)"/><ellipse cx="453.6" cy="150.4" rx="6.5" ry="4.3" fill="#dc403a" transform="rotate(10 453.6 150.4)"/><ellipse cx="430.9" cy="165.4" rx="7.1" ry="6.5" fill="#b02c78"/><ellipse cx="413.5" cy="171.5" rx="5.5" ry="6.5" fill="#90aab0"/><ellipse cx="463.9" cy="169.6" rx="5.9" ry="5.7" fill="#8a3418"/><ellipse cx="366.8" cy="189.5" rx="6.9" ry="5.3" fill="#8a5848" transform="rotate(15 366.8 189.5)"/><ellipse cx="405.5" cy="191.9" rx="3.6" ry="4.1" fill="#b078c0" transform="rotate(10 405.5 191.9)"/><ellipse cx="429.5" cy="190.9" rx="5.5" ry="5.1" fill="#5faa50"/><ellipse cx="459.5" cy="199.0" rx="5.3" ry="7.1" fill="#dc403a"/><ellipse cx="411.4" cy="207.3" rx="7.5" ry="6.9" fill="#c04878"/><ellipse cx="382.2" cy="215.4" rx="6.9" ry="6.5" fill="#5faa50"/><ellipse cx="443.8" cy="217.3" rx="5.3" ry="6.3" fill="#3a9cc0"/><ellipse cx="424.8" cy="228.8" rx="8.1" ry="5.9" fill="#3a9cc8"/><ellipse cx="473.8" cy="234.7" rx="5.9" ry="6.9" fill="#d098d0"/><ellipse cx="361.4" cy="239.3" rx="7.5" ry="6.3" fill="#c08850"/><ellipse cx="439.0" cy="241.2" rx="4.9" ry="4.7" fill="#3ac098"/><ellipse cx="252.3" cy="209.8" rx="5.5" ry="4.1" fill="#d8c820" transform="rotate(10 252.3 209.8)"/><ellipse cx="251.1" cy="226.2" rx="6.9" ry="4.9" fill="#5faa50" transform="rotate(-20 251.1 226.2)"/><ellipse cx="272.0" cy="238.9" rx="5.1" ry="4.1" fill="#3a9cc8"/><ellipse cx="292.3" cy="242.4" rx="4.5" ry="3.2" fill="#5faa50"/><ellipse cx="483.0" cy="135.8" rx="2.0" ry="4.9" fill="#b8b8b8" filter="url(#bl)"/><ellipse cx="483.0" cy="191.1" rx="2.0" ry="5.5" fill="#777777" filter="url(#bl)"/><ellipse cx="213.4" cy="247.6" rx="4.9" ry="4.5" fill="#c440c4"/><ellipse cx="3.6" cy="275.0" rx="4.3" ry="4.3" fill="#3a5a20"/><ellipse cx="9.5" cy="280.9" rx="4.7" ry="4.9" fill="#4a2898"/><ellipse cx="1.6" cy="284.1" rx="2.8" ry="4.7" fill="#808080" filter="url(#bl)"/><ellipse cx="13.2" cy="289.6" rx="4.9" ry="6.3" fill="#a85820" transform="rotate(10 13.2 289.6)"/><ellipse cx="213.4" cy="270.1" rx="6.7" ry="5.7" fill="#4a3858"/><ellipse cx="198.6" cy="276.2" rx="6.5" ry="6.9" fill="#a85080"/><ellipse cx="104.0" cy="283.5" rx="6.1" ry="5.3" fill="#d04858" transform="rotate(-15 104.0 283.5)"/><ellipse cx="127.9" cy="277.8" rx="5.1" ry="4.3" fill="#d8c820"/><ellipse cx="71.7" cy="297.3" rx="6.5" ry="5.3" fill="#3a2090" transform="rotate(-15 71.7 297.3)"/><ellipse cx="89.0" cy="302.8" rx="6.3" ry="6.3" fill="#88cc70"/><ellipse cx="110.7" cy="297.3" rx="3.9" ry="3.9" fill="#8a4020"/><ellipse cx="118.0" cy="303.0" rx="5.9" ry="6.3" fill="#dc403a" transform="rotate(15 118.0 303.0)"/><ellipse cx="118.4" cy="318.8" rx="6.5" ry="4.1" fill="#60d010"/><ellipse cx="94.0" cy="325.9" rx="6.1" ry="5.3" fill="#e0788c"/><ellipse cx="16.0" cy="327.3" rx="5.1" ry="4.7" fill="#a82c68"/><ellipse cx="34.3" cy="340.9" rx="5.7" ry="5.3" fill="#9840c8"/><ellipse cx="14.2" cy="345.3" rx="5.5" ry="5.5" fill="#d04850"/><ellipse cx="126.5" cy="342.1" rx="6.5" ry="7.3" fill="#c440c4" transform="rotate(10 126.5 342.1)"/><ellipse cx="59.0" cy="359.5" rx="5.1" ry="5.9" fill="#90d078" transform="rotate(15 59.0 359.5)"/><ellipse cx="172.9" cy="293.7" rx="5.1" ry="6.1" fill="#58c0e0"/><ellipse cx="177.1" cy="305.2" rx="6.5" ry="4.7" fill="#d8c0a0" transform="rotate(10 177.1 305.2)"/><ellipse cx="179.2" cy="314.7" rx="5.7" ry="5.3" fill="#585868"/><ellipse cx="205.7" cy="298.5" rx="6.9" ry="6.3" fill="#3a5a20"/><ellipse cx="209.8" cy="308.7" rx="6.1" ry="4.9" fill="#d8a868"/><ellipse cx="209.6" cy="316.4" rx="5.3" ry="4.3" fill="#5a9850"/><ellipse cx="235.3" cy="292.8" rx="5.7" ry="5.1" fill="#d8c820"/><ellipse cx="217.9" cy="321.2" rx="5.1" ry="5.7" fill="#d8c820" transform="rotate(10 217.9 321.2)"/><ellipse cx="201.9" cy="324.5" rx="6.1" ry="6.1" fill="#48a0c8" transform="rotate(10 201.9 324.5)"/><ellipse cx="192.9" cy="330.5" rx="5.1" ry="5.9" fill="#2f9a7c" transform="rotate(-15 192.9 330.5)"/><ellipse cx="236.9" cy="337.4" rx="5.1" ry="6.9" fill="#a0c050"/><ellipse cx="227.6" cy="345.3" rx="3.9" ry="5.7" fill="#809098"/><ellipse cx="166.4" cy="339.3" rx="6.3" ry="6.5" fill="#c89858" transform="rotate(-20 166.4 339.3)"/><ellipse cx="176.9" cy="344.9" rx="4.9" ry="4.9" fill="#a878b8"/><ellipse cx="214.8" cy="351.2" rx="6.9" ry="5.7" fill="#d8c820"/><ellipse cx="186.3" cy="359.1" rx="5.5" ry="6.5" fill="#8a5848"/><ellipse cx="161.7" cy="360.5" rx="5.5" ry="4.9" fill="#1838d0"/><ellipse cx="130.9" cy="363.6" rx="5.1" ry="4.7" fill="#90a8b0"/><ellipse cx="229.6" cy="359.3" rx="5.5" ry="5.9" fill="#c08040" transform="rotate(-10 229.6 359.3)"/><ellipse cx="217.7" cy="363.6" rx="5.3" ry="4.7" fill="#d898d0"/><ellipse cx="201.3" cy="363.2" rx="5.3" ry="5.1" fill="#2f9a7c"/><ellipse cx="247.3" cy="258.8" rx="5.9" ry="6.5" fill="#d098c8"/><ellipse cx="289.0" cy="256.0" rx="5.9" ry="5.1" fill="#90a8a8"/><ellipse cx="322.0" cy="253.9" rx="5.1" ry="2.8" fill="#e05050" transform="rotate(-20 322.0 253.9)"/><ellipse cx="329.9" cy="259.8" rx="5.9" ry="3.9" fill="#1f7058" transform="rotate(-20 329.9 259.8)"/><ellipse cx="366.8" cy="245.6" rx="4.3" ry="3.9" fill="#48c0e8"/><ellipse cx="364.6" cy="255.3" rx="3.9" ry="5.3" fill="#e05870" transform="rotate(30 364.6 255.3)"/><ellipse cx="373.3" cy="253.5" rx="5.1" ry="7.1" fill="#9a6030" transform="rotate(15 373.3 253.5)"/><ellipse cx="442.0" cy="252.9" rx="3.9" ry="4.3" fill="#d0c098"/><ellipse cx="452.6" cy="250.9" rx="4.9" ry="4.3" fill="#a89078"/><ellipse cx="449.3" cy="260.2" rx="5.5" ry="4.9" fill="#5faa50"/><ellipse cx="420.1" cy="264.3" rx="7.1" ry="6.3" fill="#1f7058" transform="rotate(20 420.1 264.3)"/><ellipse cx="479.9" cy="265.3" rx="4.3" ry="4.9" fill="#9a7058"/><ellipse cx="270.8" cy="273.4" rx="6.1" ry="5.7" fill="#8018c0"/><ellipse cx="291.0" cy="272.2" rx="5.3" ry="4.7" fill="#c0b088"/><ellipse cx="249.1" cy="281.9" rx="4.5" ry="5.3" fill="#c0b088"/><ellipse cx="314.1" cy="279.9" rx="4.1" ry="4.1" fill="#8078d0"/><ellipse cx="295.9" cy="284.5" rx="4.1" ry="4.7" fill="#6a8840"/><ellipse cx="376.2" cy="272.8" rx="5.7" ry="6.3" fill="#a87040"/><ellipse cx="391.8" cy="275.0" rx="5.1" ry="7.9" fill="#c88020"/><ellipse cx="364.4" cy="279.9" rx="6.3" ry="3.9" fill="#4840a8" transform="rotate(-35 364.4 279.9)"/><ellipse cx="405.3" cy="280.1" rx="6.9" ry="6.5" fill="#505060"/><ellipse cx="460.3" cy="272.4" rx="4.7" ry="5.7" fill="#a08870"/><ellipse cx="443.9" cy="278.9" rx="4.7" ry="4.1" fill="#8a3818"/><ellipse cx="261.6" cy="292.0" rx="4.7" ry="5.1" fill="#5a3030"/><ellipse cx="347.0" cy="293.3" rx="6.3" ry="4.7" fill="#5a3030"/><ellipse cx="304.4" cy="298.7" rx="6.5" ry="4.1" fill="#483850"/><ellipse cx="425.0" cy="292.0" rx="5.1" ry="5.1" fill="#8078d0"/><ellipse cx="470.6" cy="291.0" rx="5.5" ry="4.9" fill="#8018c0"/><ellipse cx="450.9" cy="292.6" rx="6.1" ry="4.9" fill="#3a5420"/><ellipse cx="433.1" cy="299.3" rx="5.1" ry="4.7" fill="#4a3858"/><ellipse cx="370.9" cy="300.1" rx="6.1" ry="5.1" fill="#c08850"/><ellipse cx="396.0" cy="299.3" rx="5.1" ry="5.5" fill="#60c818"/><ellipse cx="405.3" cy="301.2" rx="3.8" ry="5.7" fill="#c88020"/><ellipse cx="414.5" cy="304.4" rx="4.5" ry="6.7" fill="#88c878"/><ellipse cx="477.9" cy="303.2" rx="4.9" ry="4.7" fill="#6a9840" transform="rotate(20 477.9 303.2)"/><ellipse cx="450.3" cy="306.2" rx="6.7" ry="6.7" fill="#c8c098"/><ellipse cx="246.9" cy="305.4" rx="5.5" ry="4.7" fill="#2fb090"/><ellipse cx="296.9" cy="312.3" rx="7.1" ry="6.5" fill="#60c818" transform="rotate(10 296.9 312.3)"/><ellipse cx="280.3" cy="314.9" rx="5.5" ry="5.1" fill="#8078d0"/><ellipse cx="422.8" cy="312.1" rx="4.3" ry="4.9" fill="#c8c098"/><ellipse cx="255.8" cy="321.2" rx="4.1" ry="4.5" fill="#d08828"/><ellipse cx="331.8" cy="318.4" rx="5.1" ry="5.7" fill="#e07890"/><ellipse cx="364.8" cy="317.4" rx="6.1" ry="4.7" fill="#a83870"/><ellipse cx="338.1" cy="325.3" rx="4.3" ry="5.7" fill="#d8a868"/><ellipse cx="346.8" cy="323.0" rx="4.3" ry="5.9" fill="#1f7058"/><ellipse cx="315.4" cy="326.9" rx="5.7" ry="8.1" fill="#a81848" transform="rotate(10 315.4 326.9)"/><ellipse cx="385.1" cy="324.5" rx="5.1" ry="5.9" fill="#3a5a20"/><ellipse cx="463.9" cy="322.4" rx="6.1" ry="5.7" fill="#88cc70"/><ellipse cx="272.4" cy="331.6" rx="5.5" ry="4.9" fill="#b02048" transform="rotate(10 272.4 331.6)"/><ellipse cx="293.3" cy="336.2" rx="5.5" ry="6.5" fill="#a05898" transform="rotate(-15 293.3 336.2)"/><ellipse cx="401.5" cy="331.1" rx="5.7" ry="6.5" fill="#a868a8"/><ellipse cx="411.8" cy="332.8" rx="3.9" ry="4.3" fill="#e098d0"/><ellipse cx="417.3" cy="328.9" rx="5.7" ry="5.9" fill="#a040d0"/><ellipse cx="433.5" cy="330.9" rx="6.5" ry="7.1" fill="#c0a080"/><ellipse cx="359.7" cy="335.4" rx="4.9" ry="4.7" fill="#90a8a8"/><ellipse cx="380.0" cy="335.6" rx="5.1" ry="4.1" fill="#a82c68" transform="rotate(10 380.0 335.6)"/><ellipse cx="454.0" cy="339.1" rx="6.1" ry="5.5" fill="#5f9040"/><ellipse cx="466.5" cy="340.3" rx="4.7" ry="5.7" fill="#b0d0c8"/><ellipse cx="253.5" cy="346.3" rx="7.5" ry="6.9" fill="#4a3898"/><ellipse cx="277.1" cy="346.8" rx="6.3" ry="7.1" fill="#d8a860" transform="rotate(-15 277.1 346.8)"/><ellipse cx="320.6" cy="344.7" rx="4.9" ry="6.7" fill="#1030c8"/><ellipse cx="337.7" cy="345.9" rx="6.1" ry="5.1" fill="#5a2c30"/><ellipse cx="384.9" cy="344.7" rx="5.1" ry="6.1" fill="#b8d060"/><ellipse cx="412.6" cy="345.3" rx="5.7" ry="5.7" fill="#e06070"/><ellipse cx="398.3" cy="348.8" rx="5.7" ry="3.9" fill="#c8b088"/><ellipse cx="372.3" cy="353.2" rx="6.5" ry="4.9" fill="#3aa888" transform="rotate(15 372.3 353.2)"/><ellipse cx="391.4" cy="358.5" rx="5.5" ry="5.7" fill="#4838a0"/><ellipse cx="356.1" cy="357.7" rx="5.1" ry="6.1" fill="#8a5848"/><ellipse cx="346.6" cy="359.3" rx="4.9" ry="6.1" fill="#6a8838" transform="rotate(-30 346.6 359.3)"/><ellipse cx="418.7" cy="358.1" rx="6.1" ry="6.5" fill="#a86830"/><ellipse cx="431.5" cy="359.5" rx="6.5" ry="6.5" fill="#9a7860"/><ellipse cx="459.5" cy="355.9" rx="5.5" ry="5.1" fill="#8090a0"/><ellipse cx="286.8" cy="363.2" rx="6.1" ry="5.1" fill="#a848d0"/><ellipse cx="330.4" cy="366.4" rx="5.5" ry="5.1" fill="#a87040"/><ellipse cx="483.0" cy="291.4" rx="2.0" ry="4.3" fill="#999999" filter="url(#bl)"/><ellipse cx="483.0" cy="342.7" rx="2.0" ry="5.9" fill="#5a5a5a" filter="url(#bl)"/><ellipse cx="20.9" cy="370.9" rx="6.1" ry="7.5" fill="#a848d0"/><ellipse cx="37.5" cy="370.9" rx="6.5" ry="5.9" fill="#3a5a20" transform="rotate(15 37.5 370.9)"/><ellipse cx="3.9" cy="383.4" rx="6.3" ry="5.5" fill="#1030c8"/><ellipse cx="60.4" cy="383.8" rx="5.5" ry="5.1" fill="#d8c820"/><ellipse cx="70.1" cy="396.8" rx="6.9" ry="6.3" fill="#d8a860"/><ellipse cx="32.8" cy="401.9" rx="6.3" ry="6.1" fill="#a868a8"/><ellipse cx="71.3" cy="405.1" rx="4.3" ry="3.6" fill="#4a3858"/><ellipse cx="52.9" cy="404.7" rx="6.5" ry="7.5" fill="#4838a0" transform="rotate(-20 52.9 404.7)"/><ellipse cx="7.1" cy="407.5" rx="7.9" ry="6.3" fill="#40b8e0"/><ellipse cx="72.4" cy="414.0" rx="5.5" ry="4.9" fill="#3aa888"/><ellipse cx="102.6" cy="414.6" rx="6.9" ry="5.9" fill="#b078c0" transform="rotate(10 102.6 414.6)"/><ellipse cx="23.3" cy="422.1" rx="4.5" ry="4.1" fill="#9a7860"/><ellipse cx="46.8" cy="419.9" rx="6.1" ry="6.1" fill="#9a7860" transform="rotate(-10 46.8 419.9)"/><ellipse cx="20.9" cy="431.3" rx="5.1" ry="4.5" fill="#3aa888" transform="rotate(15 20.9 431.3)"/><ellipse cx="64.7" cy="431.1" rx="5.1" ry="5.1" fill="#1f6850"/><ellipse cx="49.2" cy="435.7" rx="5.5" ry="6.1" fill="#5a3030"/><ellipse cx="34.0" cy="440.2" rx="6.1" ry="3.9" fill="#90b860"/><ellipse cx="23.9" cy="443.6" rx="4.3" ry="4.5" fill="#6060c0"/><ellipse cx="10.3" cy="455.4" rx="5.7" ry="4.7" fill="#4a2898"/><ellipse cx="71.3" cy="454.0" rx="5.7" ry="6.1" fill="#a85820"/><ellipse cx="61.8" cy="466.9" rx="6.5" ry="5.3" fill="#6a8838"/><ellipse cx="37.3" cy="473.0" rx="4.7" ry="7.1" fill="#c440c4" transform="rotate(15 37.3 473.0)"/><ellipse cx="27.6" cy="481.1" rx="3.9" ry="3.6" fill="#a848d0"/><ellipse cx="85.1" cy="480.9" rx="5.3" ry="4.3" fill="#484058"/><ellipse cx="144.1" cy="372.7" rx="5.5" ry="5.1" fill="#9a8870"/><ellipse cx="176.7" cy="376.1" rx="6.1" ry="8.9" fill="#a868a8"/><ellipse cx="187.5" cy="382.8" rx="4.5" ry="4.9" fill="#e05060"/><ellipse cx="191.7" cy="367.6" rx="3.9" ry="4.7" fill="#b0a088"/><ellipse cx="136.0" cy="397.6" rx="6.7" ry="6.9" fill="#d8a860" transform="rotate(-20 136.0 397.6)"/><ellipse cx="208.6" cy="394.4" rx="5.5" ry="5.7" fill="#80a0a0" transform="rotate(10 208.6 394.4)"/><ellipse cx="221.5" cy="383.4" rx="5.7" ry="5.3" fill="#a81848" transform="rotate(-20 221.5 383.4)"/><ellipse cx="226.4" cy="390.7" rx="5.5" ry="6.3" fill="#a87030" transform="rotate(20 226.4 390.7)"/><ellipse cx="232.9" cy="400.3" rx="6.1" ry="6.5" fill="#505060"/><ellipse cx="137.4" cy="420.1" rx="5.1" ry="7.3" fill="#4a3a50" transform="rotate(-15 137.4 420.1)"/><ellipse cx="132.1" cy="445.0" rx="4.5" ry="7.5" fill="#a868a8" transform="rotate(-25 132.1 445.0)"/><ellipse cx="107.2" cy="459.6" rx="5.1" ry="5.7" fill="#4838a0"/><ellipse cx="110.5" cy="464.7" rx="3.9" ry="2.8" fill="#d02858" transform="rotate(-20 110.5 464.7)"/><ellipse cx="127.5" cy="468.8" rx="5.3" ry="4.9" fill="#c08040" transform="rotate(-10 127.5 468.8)"/><ellipse cx="231.0" cy="457.8" rx="4.1" ry="6.1" fill="#a848d0" transform="rotate(-10 231.0 457.8)"/><ellipse cx="237.7" cy="480.1" rx="5.5" ry="5.1" fill="#40b8e0"/><ellipse cx="17.8" cy="483.3" rx="5.5" ry="2.0" fill="#6a6a6a" filter="url(#bl)"/><ellipse cx="45.4" cy="483.3" rx="3.9" ry="2.0" fill="#5a5a5a" filter="url(#bl)"/><ellipse cx="96.7" cy="482.9" rx="5.1" ry="2.4" fill="#4a4a4a" filter="url(#bl)"/><ellipse cx="217.1" cy="482.9" rx="4.7" ry="2.4" fill="#4a4a4a" filter="url(#bl)"/><ellipse cx="0.8" cy="431.1" rx="1.6" ry="4.9" fill="#3a3a3a" filter="url(#bl)"/><ellipse cx="0.8" cy="450.9" rx="1.6" ry="3.9" fill="#2c2c2c" filter="url(#bl)"/><ellipse cx="258.4" cy="374.9" rx="7.5" ry="6.9" fill="#d8c820"/><ellipse cx="314.3" cy="371.5" rx="6.5" ry="6.5" fill="#c440c4"/><ellipse cx="370.3" cy="367.6" rx="3.6" ry="4.3" fill="#90a0a8"/><ellipse cx="381.8" cy="368.6" rx="5.3" ry="5.5" fill="#a8c040" transform="rotate(-15 381.8 368.6)"/><ellipse cx="394.6" cy="368.8" rx="5.3" ry="5.1" fill="#a87040"/><ellipse cx="288.8" cy="381.2" rx="5.9" ry="6.5" fill="#5f9040" transform="rotate(10 288.8 381.2)"/><ellipse cx="364.2" cy="376.5" rx="6.5" ry="5.5" fill="#c440c4" transform="rotate(10 364.2 376.5)"/><ellipse cx="447.5" cy="372.5" rx="5.9" ry="6.1" fill="#505060"/><ellipse cx="479.3" cy="367.6" rx="5.9" ry="5.3" fill="#a8b830" transform="rotate(20 479.3 367.6)"/><ellipse cx="423.4" cy="378.2" rx="5.5" ry="4.3" fill="#d0c8a0" transform="rotate(15 423.4 378.2)"/><ellipse cx="419.5" cy="385.1" rx="5.5" ry="4.1" fill="#c02850"/><ellipse cx="466.6" cy="380.2" rx="4.9" ry="5.5" fill="#a85080" transform="rotate(-10 466.6 380.2)"/><ellipse cx="474.0" cy="387.1" rx="7.1" ry="4.7" fill="#2048d8" transform="rotate(-30 474.0 387.1)"/><ellipse cx="400.9" cy="384.4" rx="5.1" ry="4.5" fill="#3a9878" transform="rotate(-10 400.9 384.4)"/><ellipse cx="347.4" cy="387.7" rx="5.5" ry="5.1" fill="#4a2898" transform="rotate(10 347.4 387.7)"/><ellipse cx="369.9" cy="387.1" rx="4.9" ry="3.6" fill="#40b0e0" transform="rotate(10 369.9 387.1)"/><ellipse cx="270.0" cy="394.2" rx="6.9" ry="5.7" fill="#60c818"/><ellipse cx="252.1" cy="400.9" rx="5.9" ry="6.1" fill="#a8b848"/><ellipse cx="242.4" cy="398.6" rx="3.9" ry="5.9" fill="#c01848"/><ellipse cx="311.1" cy="394.8" rx="6.1" ry="6.1" fill="#d09858"/><ellipse cx="326.1" cy="397.8" rx="4.3" ry="3.9" fill="#e06070"/><ellipse cx="342.3" cy="400.5" rx="6.3" ry="6.5" fill="#a848d0" transform="rotate(-20 342.3 400.5)"/><ellipse cx="373.9" cy="396.8" rx="4.9" ry="5.1" fill="#9a5830"/><ellipse cx="388.5" cy="396.6" rx="4.5" ry="4.9" fill="#d898d0"/><ellipse cx="383.5" cy="405.5" rx="6.5" ry="5.5" fill="#1030c8"/><ellipse cx="437.8" cy="392.1" rx="5.1" ry="4.3" fill="#3ac098"/><ellipse cx="455.2" cy="393.4" rx="5.5" ry="4.5" fill="#3ac098"/><ellipse cx="421.2" cy="398.8" rx="5.5" ry="3.9" fill="#c8d850" transform="rotate(-20 421.2 398.8)"/><ellipse cx="439.8" cy="402.9" rx="5.1" ry="5.1" fill="#8a3c1c"/><ellipse cx="460.5" cy="408.4" rx="5.9" ry="4.5" fill="#9a8870" transform="rotate(-10 460.5 408.4)"/><ellipse cx="276.8" cy="411.0" rx="8.3" ry="6.3" fill="#a848d0" transform="rotate(-5 276.8 411.0)"/><ellipse cx="327.9" cy="409.2" rx="5.1" ry="2.8" fill="#70d820"/><ellipse cx="308.1" cy="416.7" rx="7.9" ry="6.5" fill="#8078d0"/><ellipse cx="357.3" cy="416.3" rx="6.3" ry="4.7" fill="#a060a0"/><ellipse cx="363.4" cy="424.8" rx="6.7" ry="5.1" fill="#a85828" transform="rotate(-10 363.4 424.8)"/><ellipse cx="395.6" cy="421.9" rx="5.5" ry="6.1" fill="#4838a0"/><ellipse cx="431.3" cy="414.6" rx="5.5" ry="5.5" fill="#48a0c8"/><ellipse cx="450.1" cy="417.7" rx="4.9" ry="6.1" fill="#48a0c8"/><ellipse cx="472.0" cy="424.2" rx="5.3" ry="4.5" fill="#9080d0" transform="rotate(10 472.0 424.2)"/><ellipse cx="481.1" cy="432.7" rx="4.1" ry="7.1" fill="#c440c4"/><ellipse cx="334.4" cy="426.2" rx="6.5" ry="5.7" fill="#d8c820"/><ellipse cx="253.5" cy="430.4" rx="8.5" ry="7.3" fill="#d08828" transform="rotate(-15 253.5 430.4)"/><ellipse cx="312.9" cy="435.9" rx="6.9" ry="7.1" fill="#a08870" transform="rotate(-20 312.9 435.9)"/><ellipse cx="437.2" cy="429.4" rx="5.9" ry="4.1" fill="#58d0f0" transform="rotate(-25 437.2 429.4)"/><ellipse cx="386.3" cy="435.1" rx="6.5" ry="5.5" fill="#6a9840"/><ellipse cx="366.0" cy="439.4" rx="6.1" ry="4.7" fill="#a8b030" transform="rotate(-10 366.0 439.4)"/><ellipse cx="439.2" cy="444.0" rx="5.7" ry="6.1" fill="#a04820"/><ellipse cx="456.0" cy="441.8" rx="4.1" ry="6.1" fill="#e098d0"/><ellipse cx="466.8" cy="444.4" rx="4.1" ry="5.7" fill="#a8b830" transform="rotate(10 466.8 444.4)"/><ellipse cx="394.2" cy="454.2" rx="5.3" ry="5.9" fill="#1f7058"/><ellipse cx="398.2" cy="445.9" rx="6.3" ry="5.5" fill="#e0788c" transform="rotate(15 398.2 445.9)"/><ellipse cx="416.9" cy="453.2" rx="5.9" ry="8.9" fill="#b02868" transform="rotate(10 416.9 453.2)"/><ellipse cx="341.5" cy="451.3" rx="5.5" ry="5.7" fill="#3a9878"/><ellipse cx="283.1" cy="456.2" rx="8.7" ry="7.1" fill="#c440c4"/><ellipse cx="257.0" cy="461.5" rx="5.9" ry="8.5" fill="#3a9878" transform="rotate(15 257.0 461.5)"/><ellipse cx="305.4" cy="457.4" rx="4.1" ry="3.9" fill="#d09858"/><ellipse cx="305.8" cy="464.7" rx="4.5" ry="3.9" fill="#e890a8"/><ellipse cx="279.7" cy="469.2" rx="7.9" ry="6.7" fill="#6a8838"/><ellipse cx="332.6" cy="461.9" rx="5.3" ry="6.1" fill="#4a2898" transform="rotate(-20 332.6 461.9)"/><ellipse cx="320.4" cy="470.8" rx="4.7" ry="6.1" fill="#5848b0"/><ellipse cx="352.4" cy="472.6" rx="4.7" ry="7.1" fill="#4838a0" transform="rotate(-5 352.4 472.6)"/><ellipse cx="363.4" cy="465.3" rx="5.7" ry="5.3" fill="#808890"/><ellipse cx="374.7" cy="458.0" rx="5.3" ry="6.1" fill="#b0d0c8"/><ellipse cx="441.4" cy="463.7" rx="6.5" ry="5.7" fill="#a86030" transform="rotate(-10 441.4 463.7)"/><ellipse cx="473.0" cy="460.4" rx="7.3" ry="5.3" fill="#d0c8a0" transform="rotate(-15 473.0 460.4)"/><ellipse cx="480.1" cy="467.7" rx="5.1" ry="5.9" fill="#1838d0"/><ellipse cx="461.3" cy="480.9" rx="5.7" ry="4.7" fill="#a82c70"/><ellipse cx="369.3" cy="482.5" rx="5.9" ry="2.8" fill="#808080" filter="url(#bl)"/><ellipse cx="384.1" cy="482.9" rx="5.1" ry="2.4" fill="#707070" filter="url(#bl)"/><ellipse cx="424.6" cy="482.9" rx="5.1" ry="2.0" fill="#5a5a5a" filter="url(#bl)"/><ellipse cx="312.1" cy="484.0" rx="3.9" ry="1.2" fill="#3a3a3a" filter="url(#bl)"/></g></svg>
<div style="left:802px;top:54px;width:2px;height:270px;background:#3b4049;"></div>
<svg style="left:815px;top:62px" width="9" height="7" viewBox="0 0 9 7"><ellipse cx="4.3" cy="3.6" rx="3.6" ry="2.2" fill="none" stroke="#b9babd" stroke-width="1"/><circle cx="4.3" cy="3.6" r="1.1" fill="#d0d1d3"/><path d="M1 6.3L7.8 0.6" stroke="#c8c9cb" stroke-width="0.9"/></svg><svg style="left:831px;top:61px" width="9" height="8" viewBox="0 0 9 8"><rect x="0.7" y="0.7" width="5.3" height="5" rx="1" fill="none" stroke="#c8c9cb" stroke-width="1.2"/><path d="M7.3 2.2V7H2.5" stroke="#9b9da1" stroke-width="1.2" fill="none"/></svg>
<div style="left:845px;top:65px;width:162px;height:1px;background:#414851;"></div>
<div style="left:1000px;top:56px;width:222px;height:16.2px;overflow:hidden"><div class="t" style="right:6px;top:3.0px;font-size:16px;color:#59606b;transform:scaleX(0.903);transform-origin:100% 0;">Regionprops (scikit-image, nsr)</div></div>
<div class="t" style="left:816.5px;top:88.0px;font-size:12.2px;color:#f0f1f2;transform:scaleX(0.843);transform-origin:0 0;">image</div>
<div class="t" style="left:816.5px;top:115.5px;font-size:12.2px;color:#f0f1f2;transform:scaleX(0.847);transform-origin:0 0;">labels</div>
<div style="left:886px;top:83px;width:335px;height:22px;background:#414851;border-radius:2px"></div>
<div style="left:886px;top:111px;width:335px;height:22px;background:#414851;border-radius:2px"></div>
<div class="t" style="left:893.5px;top:88.5px;font-size:12.2px;color:#f0f1f2;transform:scaleX(0.878);transform-origin:0 0;">human_mitosis (data)</div>
<div class="t" style="left:893.5px;top:116.2px;font-size:12.2px;color:#f0f1f2;transform:scaleX(0.887);transform-origin:0 0;">StarDist labels (data)</div>
<svg style="left:1202px;top:90px" width="12.5" height="8" viewBox="0 0 12.5 8"><path d="M0 0H12.5L6.25 8Z" fill="#868e93"/></svg>
<svg style="left:1202px;top:118px" width="12.5" height="8" viewBox="0 0 12.5 8"><path d="M0 0H12.5L6.25 8Z" fill="#868e93"/></svg>
<div style="left:814px;top:140px;width:18px;height:18px;background:#414851;border-radius:2px"></div>
<svg style="left:814px;top:140px" width="18" height="18" viewBox="0 0 18 18"><path d="M3 10.3L7.2 13.2L14.2 5" fill="none" stroke="#dcdddf" stroke-width="1.9"/></svg>
<div class="t" style="left:836.3px;top:143.4px;font-size:12.2px;color:#f0f1f2;transform:scaleX(0.816);transform-origin:0 0;">size</div>
<div style="left:814px;top:166px;width:18px;height:18px;background:#414851;border-radius:2px"></div>
<svg style="left:814px;top:166px" width="18" height="18" viewBox="0 0 18 18"><path d="M3 10.3L7.2 13.2L14.2 5" fill="none" stroke="#dcdddf" stroke-width="1.9"/></svg>
<div class="t" style="left:836.3px;top:169.4px;font-size:12.2px;color:#f0f1f2;transform:scaleX(0.916);transform-origin:0 0;">intensity</div>
<div style="left:814px;top:192px;width:18px;height:18px;background:#414851;border-radius:2px"></div>
<svg style="left:814px;top:192px" width="18" height="18" viewBox="0 0 18 18"><path d="M3 10.3L7.2 13.2L14.2 5" fill="none" stroke="#dcdddf" stroke-width="1.9"/></svg>
<div class="t" style="left:836.3px;top:195.4px;font-size:12.2px;color:#f0f1f2;transform:scaleX(0.887);transform-origin:0 0;">perimeter</div>
<div style="left:814px;top:218px;width:18px;height:18px;background:#414851;border-radius:2px"></div>
<svg style="left:814px;top:218px" width="18" height="18" viewBox="0 0 18 18"><path d="M3 10.3L7.2 13.2L14.2 5" fill="none" stroke="#dcdddf" stroke-width="1.9"/></svg>
<div class="t" style="left:836.3px;top:221.4px;font-size:12.2px;color:#f0f1f2;transform:scaleX(0.872);transform-origin:0 0;">shape</div>
<div style="left:814px;top:244px;width:18px;height:18px;background:#414851;border-radius:2px"></div>
<div class="t" style="left:836.3px;top:247.4px;font-size:12.2px;color:#f0f1f2;transform:scaleX(0.880);transform-origin:0 0;">position</div>
<div style="left:814px;top:270px;width:18px;height:18px;background:#414851;border-radius:2px"></div>
<div class="t" style="left:836.3px;top:273.4px;font-size:12.2px;color:#f0f1f2;transform:scaleX(0.863);transform-origin:0 0;">moments</div>
<div style="left:807px;top:133px;width:83px;height:110px;border:5px solid #22b14c"></div>
<div style="left:813px;top:295px;width:408px;height:21px;background:#414851;border-radius:2px"></div>
<div class="t" style="left:1006.3px;top:299.4px;font-size:12.2px;color:#f0f1f2;transform:scaleX(0.849);transform-origin:0 0;">Run</div>
<svg style="left:990px;top:255px" width="50" height="48" viewBox="990 255 50 48"><path d="M1005.9 258.9H1022.1Q1024.1 258.9 1024.1 260.9V277.6H1031Q1033.2 277.6 1031.8 279.3L1015 299.3Q1013.9 300.4 1012.8 299.3L996.2 279.3Q994.8 277.6 997 277.6H1003.9V260.9Q1003.9 258.9 1005.9 258.9Z" fill="#22b14c"/></svg>
<div style="left:800px;top:324px;width:428px;height:293px;border:5px solid #22b14c"></div>
<svg style="left:816px;top:334px" width="8" height="8" viewBox="0 0 8 8"><path d="M1 1L7 7M7 1L1 7" stroke="#c8c9cb" stroke-width="1.3" fill="none"/></svg><svg style="left:831px;top:335px" width="9" height="7" viewBox="0 0 9 7"><ellipse cx="4.3" cy="3.6" rx="3.6" ry="2.2" fill="none" stroke="#b9babd" stroke-width="1"/><circle cx="4.3" cy="3.6" r="1.1" fill="#d0d1d3"/><path d="M1 6.3L7.8 0.6" stroke="#c8c9cb" stroke-width="0.9"/></svg><svg style="left:847px;top:334px" width="9" height="8" viewBox="0 0 9 8"><rect x="0.7" y="0.7" width="5.3" height="5" rx="1" fill="none" stroke="#c8c9cb" stroke-width="1.2"/><path d="M7.3 2.2V7H2.5" stroke="#9b9da1" stroke-width="1.2" fill="none"/></svg>
<div style="left:861px;top:338px;width:169px;height:1px;background:#414851;"></div>
<div style="left:1000px;top:328px;width:222px;height:17px;overflow:hidden"><div class="t" style="right:6.4px;top:3.5px;font-size:16px;color:#59606b;transform:scaleX(0.888);transform-origin:100% 0;">Properties of StarDist labels</div></div>
<div style="left:813px;top:356px;width:202px;height:21px;background:#414851;border-radius:2px"></div>
<div style="left:1019px;top:356px;width:202px;height:21px;background:#414851;border-radius:2px"></div>
<div class="t" style="left:871.4px;top:360.7px;font-size:12.2px;color:#f0f1f2;transform:scaleX(0.885);transform-origin:0 0;">Copy to clipboard</div>
<div class="t" style="left:1084.4px;top:360.7px;font-size:12.2px;color:#f0f1f2;transform:scaleX(0.906);transform-origin:0 0;">Save as csv...</div>
<div style="left:814px;top:384px;width:393px;height:211px;overflow:hidden;background:#262930">
<div style="left:0px;top:0px;width:33px;height:27px;background:#fff;"></div><div style="left:33px;top:0px;width:100px;height:27px;background:#262930;"></div><div style="left:132px;top:2px;width:2px;height:25px;background:#15171b;"></div><div style="left:33px;top:25px;width:100px;height:2px;background:#15171b;"></div><div style="left:33px;top:0px;width:100px;height:1px;background:#2b2e36;"></div><div class="t" style="left:70.0px;top:7.0px;font-size:13px;color:#f0f1f2;transform:scaleX(0.892);transform-origin:50% 0;">label</div><div style="left:133px;top:0px;width:100px;height:27px;background:#262930;"></div><div style="left:232px;top:2px;width:2px;height:25px;background:#15171b;"></div><div style="left:133px;top:25px;width:100px;height:2px;background:#15171b;"></div><div style="left:133px;top:0px;width:100px;height:1px;background:#2b2e36;"></div><div class="t" style="left:170.7px;top:7.0px;font-size:13px;color:#f0f1f2;transform:scaleX(0.846);transform-origin:50% 0;">area</div><div style="left:233px;top:0px;width:100px;height:27px;background:#262930;"></div><div style="left:332px;top:2px;width:2px;height:25px;background:#15171b;"></div><div style="left:233px;top:25px;width:100px;height:2px;background:#15171b;"></div><div style="left:233px;top:0px;width:100px;height:1px;background:#2b2e36;"></div><div class="t" style="left:253.0px;top:7.0px;font-size:13px;color:#f0f1f2;transform:scaleX(0.872);transform-origin:50% 0;">bbox_area</div><div style="left:333px;top:0px;width:100px;height:27px;background:#262930;"></div><div style="left:432px;top:2px;width:2px;height:25px;background:#15171b;"></div><div style="left:333px;top:25px;width:100px;height:2px;background:#15171b;"></div><div style="left:333px;top:0px;width:100px;height:1px;background:#2b2e36;"></div><div class="t" style="left:351.7px;top:7.0px;font-size:13px;color:#f0f1f2;transform:scaleX(0.860);transform-origin:0 0;">convex_area</div><div style="left:0px;top:28px;width:31px;height:27px;background:#262930;"></div><div style="left:31px;top:27px;width:2px;height:30px;background:#15171b;"></div><div style="left:0px;top:55px;width:33px;height:2px;background:#15171b;"></div><div class="t" style="left:4.0px;top:37.0px;font-size:13px;color:#f0f1f2;transform:scaleX(0.860);transform-origin:0 0;">1</div><div style="left:132px;top:27px;width:1px;height:30px;background:#1f2126;"></div><div style="left:33px;top:56px;width:100px;height:1px;background:#1f2126;"></div><div class="t" style="left:36.2px;top:35.0px;font-size:13px;color:#f0f1f2;transform:scaleX(0.860);transform-origin:0 0;">1</div><div style="left:232px;top:27px;width:1px;height:30px;background:#1f2126;"></div><div style="left:133px;top:56px;width:100px;height:1px;background:#1f2126;"></div><div class="t" style="left:136.2px;top:35.0px;font-size:13px;color:#f0f1f2;transform:scaleX(0.860);transform-origin:0 0;">125</div><div style="left:332px;top:27px;width:1px;height:30px;background:#1f2126;"></div><div style="left:233px;top:56px;width:100px;height:1px;background:#1f2126;"></div><div class="t" style="left:236.2px;top:35.0px;font-size:13px;color:#f0f1f2;transform:scaleX(0.860);transform-origin:0 0;">156</div><div style="left:432px;top:27px;width:1px;height:30px;background:#1f2126;"></div><div style="left:333px;top:56px;width:100px;height:1px;background:#1f2126;"></div><div class="t" style="left:336.2px;top:35.0px;font-size:13px;color:#f0f1f2;transform:scaleX(0.860);transform-origin:0 0;">128</div><div style="left:0px;top:58px;width:31px;height:27px;background:#262930;"></div><div style="left:31px;top:57px;width:2px;height:30px;background:#15171b;"></div><div style="left:0px;top:85px;width:33px;height:2px;background:#15171b;"></div><div class="t" style="left:4.0px;top:67.0px;font-size:13px;color:#f0f1f2;transform:scaleX(0.860);transform-origin:0 0;">2</div><div style="left:132px;top:57px;width:1px;height:30px;background:#1f2126;"></div><div style="left:33px;top:86px;width:100px;height:1px;background:#1f2126;"></div><div class="t" style="left:36.2px;top:65.0px;font-size:13px;color:#f0f1f2;transform:scaleX(0.860);transform-origin:0 0;">2</div><div style="left:232px;top:57px;width:1px;height:30px;background:#1f2126;"></div><div style="left:133px;top:86px;width:100px;height:1px;background:#1f2126;"></div><div class="t" style="left:136.2px;top:65.0px;font-size:13px;color:#f0f1f2;transform:scaleX(0.860);transform-origin:0 0;">105</div><div style="left:332px;top:57px;width:1px;height:30px;background:#1f2126;"></div><div style="left:233px;top:86px;width:100px;height:1px;background:#1f2126;"></div><div class="t" style="left:236.2px;top:65.0px;font-size:13px;color:#f0f1f2;transform:scaleX(0.860);transform-origin:0 0;">143</div><div style="left:432px;top:57px;width:1px;height:30px;background:#1f2126;"></div><div style="left:333px;top:86px;width:100px;height:1px;background:#1f2126;"></div><div class="t" style="left:336.2px;top:65.0px;font-size:13px;color:#f0f1f2;transform:scaleX(0.860);transform-origin:0 0;">114</div><div style="left:0px;top:88px;width:31px;height:27px;background:#262930;"></div><div style="left:31px;top:87px;width:2px;height:30px;background:#15171b;"></div><div style="left:0px;top:115px;width:33px;height:2px;background:#15171b;"></div><div class="t" style="left:4.0px;top:97.0px;font-size:13px;color:#f0f1f2;transform:scaleX(0.860);transform-origin:0 0;">3</div><div style="left:132px;top:87px;width:1px;height:30px;background:#1f2126;"></div><div style="left:33px;top:116px;width:100px;height:1px;background:#1f2126;"></div><div class="t" style="left:36.2px;top:95.0px;font-size:13px;color:#f0f1f2;transform:scaleX(0.860);transform-origin:0 0;">3</div><div style="left:232px;top:87px;width:1px;height:30px;background:#1f2126;"></div><div style="left:133px;top:116px;width:100px;height:1px;background:#1f2126;"></div><div class="t" style="left:136.2px;top:95.0px;font-size:13px;color:#f0f1f2;transform:scaleX(0.860);transform-origin:0 0;">101</div><div style="left:332px;top:87px;width:1px;height:30px;background:#1f2126;"></div><div style="left:233px;top:116px;width:100px;height:1px;background:#1f2126;"></div><div class="t" style="left:236.2px;top:95.0px;font-size:13px;color:#f0f1f2;transform:scaleX(0.860);transform-origin:0 0;">132</div><div style="left:432px;top:87px;width:1px;height:30px;background:#1f2126;"></div><div style="left:333px;top:116px;width:100px;height:1px;background:#1f2126;"></div><div class="t" style="left:336.2px;top:95.0px;font-size:13px;color:#f0f1f2;transform:scaleX(0.860);transform-origin:0 0;">109</div><div style="left:0px;top:118px;width:31px;height:27px;background:#262930;"></div><div style="left:31px;top:117px;width:2px;height:30px;background:#15171b;"></div><div style="left:0px;top:145px;width:33px;height:2px;background:#15171b;"></div><div class="t" style="left:4.0px;top:127.0px;font-size:13px;color:#f0f1f2;transform:scaleX(0.860);transform-origin:0 0;">4</div><div style="left:132px;top:117px;width:1px;height:30px;background:#1f2126;"></div><div style="left:33px;top:146px;width:100px;height:1px;background:#1f2126;"></div><div class="t" style="left:36.2px;top:125.0px;font-size:13px;color:#f0f1f2;transform:scaleX(0.860);transform-origin:0 0;">4</div><div style="left:232px;top:117px;width:1px;height:30px;background:#1f2126;"></div><div style="left:133px;top:146px;width:100px;height:1px;background:#1f2126;"></div><div class="t" style="left:136.2px;top:125.0px;font-size:13px;color:#f0f1f2;transform:scaleX(0.860);transform-origin:0 0;">130</div><div style="left:332px;top:117px;width:1px;height:30px;background:#1f2126;"></div><div style="left:233px;top:146px;width:100px;height:1px;background:#1f2126;"></div><div class="t" style="left:236.2px;top:125.0px;font-size:13px;color:#f0f1f2;transform:scaleX(0.860);transform-origin:0 0;">156</div><div style="left:432px;top:117px;width:1px;height:30px;background:#1f2126;"></div><div style="left:333px;top:146px;width:100px;height:1px;background:#1f2126;"></div><div class="t" style="left:336.2px;top:125.0px;font-size:13px;color:#f0f1f2;transform:scaleX(0.860);transform-origin:0 0;">134</div><div style="left:0px;top:148px;width:31px;height:27px;background:#262930;"></div><div style="left:31px;top:147px;width:2px;height:30px;background:#15171b;"></div><div style="left:0px;top:175px;width:33px;height:2px;background:#15171b;"></div><div class="t" style="left:4.0px;top:157.0px;font-size:13px;color:#f0f1f2;transform:scaleX(0.860);transform-origin:0 0;">5</div><div style="left:132px;top:147px;width:1px;height:30px;background:#1f2126;"></div><div style="left:33px;top:176px;width:100px;height:1px;background:#1f2126;"></div><div class="t" style="left:36.2px;top:155.0px;font-size:13px;color:#f0f1f2;transform:scaleX(0.860);transform-origin:0 0;">5</div><div style="left:232px;top:147px;width:1px;height:30px;background:#1f2126;"></div><div style="left:133px;top:176px;width:100px;height:1px;background:#1f2126;"></div><div class="t" style="left:136.2px;top:155.0px;font-size:13px;color:#f0f1f2;transform:scaleX(0.860);transform-origin:0 0;">100</div><div style="left:332px;top:147px;width:1px;height:30px;background:#1f2126;"></div><div style="left:233px;top:176px;width:100px;height:1px;background:#1f2126;"></div><div class="t" style="left:236.2px;top:155.0px;font-size:13px;color:#f0f1f2;transform:scaleX(0.860);transform-origin:0 0;">120</div><div style="left:432px;top:147px;width:1px;height:30px;background:#1f2126;"></div><div style="left:333px;top:176px;width:100px;height:1px;background:#1f2126;"></div><div class="t" style="left:336.2px;top:155.0px;font-size:13px;color:#f0f1f2;transform:scaleX(0.860);transform-origin:0 0;">102</div><div style="left:0px;top:178px;width:31px;height:27px;background:#262930;"></div><div style="left:31px;top:177px;width:2px;height:30px;background:#15171b;"></div><div style="left:0px;top:205px;width:33px;height:2px;background:#15171b;"></div><div class="t" style="left:4.0px;top:187.0px;font-size:13px;color:#f0f1f2;transform:scaleX(0.860);transform-origin:0 0;">6</div><div style="left:132px;top:177px;width:1px;height:30px;background:#1f2126;"></div><div style="left:33px;top:206px;width:100px;height:1px;background:#1f2126;"></div><div class="t" style="left:36.2px;top:185.0px;font-size:13px;color:#f0f1f2;transform:scaleX(0.860);transform-origin:0 0;">6</div><div style="left:232px;top:177px;width:1px;height:30px;background:#1f2126;"></div><div style="left:133px;top:206px;width:100px;height:1px;background:#1f2126;"></div><div class="t" style="left:136.2px;top:185.0px;font-size:13px;color:#f0f1f2;transform:scaleX(0.860);transform-origin:0 0;">139</div><div style="left:332px;top:177px;width:1px;height:30px;background:#1f2126;"></div><div style="left:233px;top:206px;width:100px;height:1px;background:#1f2126;"></div><div class="t" style="left:236.2px;top:185.0px;font-size:13px;color:#f0f1f2;transform:scaleX(0.860);transform-origin:0 0;">180</div><div style="left:432px;top:177px;width:1px;height:30px;background:#1f2126;"></div><div style="left:333px;top:206px;width:100px;height:1px;background:#1f2126;"></div><div class="t" style="left:336.2px;top:185.0px;font-size:13px;color:#f0f1f2;transform:scaleX(0.860);transform-origin:0 0;">148</div><div style="left:0px;top:208px;width:31px;height:27px;background:#262930;"></div><div style="left:31px;top:207px;width:2px;height:30px;background:#15171b;"></div><div style="left:0px;top:235px;width:33px;height:2px;background:#15171b;"></div><div class="t" style="left:4.0px;top:217.0px;font-size:13px;color:#f0f1f2;transform:scaleX(0.860);transform-origin:0 0;">7</div><div style="left:132px;top:207px;width:1px;height:30px;background:#1f2126;"></div><div style="left:33px;top:236px;width:100px;height:1px;background:#1f2126;"></div><div class="t" style="left:36.2px;top:215.0px;font-size:13px;color:#f0f1f2;transform:scaleX(0.860);transform-origin:0 0;">7</div><div style="left:232px;top:207px;width:1px;height:30px;background:#1f2126;"></div><div style="left:133px;top:236px;width:100px;height:1px;background:#1f2126;"></div><div class="t" style="left:136.2px;top:215.0px;font-size:13px;color:#f0f1f2;transform:scaleX(0.860);transform-origin:0 0;">117</div><div style="left:332px;top:207px;width:1px;height:30px;background:#1f2126;"></div><div style="left:233px;top:236px;width:100px;height:1px;background:#1f2126;"></div><div class="t" style="left:236.2px;top:215.0px;font-size:13px;color:#f0f1f2;transform:scaleX(0.860);transform-origin:0 0;">132</div><div style="left:432px;top:207px;width:1px;height:30px;background:#1f2126;"></div><div style="left:333px;top:236px;width:100px;height:1px;background:#1f2126;"></div><div class="t" style="left:336.2px;top:215.0px;font-size:13px;color:#f0f1f2;transform:scaleX(0.860);transform-origin:0 0;">120</div>
</div>
<div style="left:1207px;top:384px;width:13px;height:211px;background:#262930;"></div>
<div style="left:1207px;top:384px;width:13px;height:13px;background:#414851;border-radius:2px"></div>
<div style="left:1207px;top:399px;width:13px;height:180px;background:#414851;border-radius:2px"></div>
<div style="left:1208px;top:401px;width:11px;height:26px;background:#6a7380;border-radius:2px"></div>
<div style="left:1207px;top:581px;width:13px;height:13px;background:#414851;border-radius:2px"></div>
<svg style="left:1207px;top:384px" width="13" height="13" viewBox="0 0 13 13"><path d="M2.6 9L6.5 4L10.4 9Z" fill="#e8e8e8"/></svg>
<svg style="left:1207px;top:581px" width="13" height="13" viewBox="0 0 13 13"><path d="M2.6 4L6.5 9L10.4 4Z" fill="#e8e8e8"/></svg>
<div style="left:814px;top:595px;width:13px;height:12px;background:#414851;border-radius:2px"></div>
<div style="left:829px;top:595px;width:362px;height:12px;background:#414851;border-radius:2px"></div>
<div style="left:831px;top:595px;width:44px;height:12px;background:#6a7380;border-radius:2px"></div>
<div style="left:1194px;top:595px;width:13px;height:12px;background:#414851;border-radius:2px"></div>
<svg style="left:814px;top:595px" width="13" height="12" viewBox="0 0 13 12"><path d="M9 2.4L4 6L9 9.6Z" fill="#e8e8e8"/></svg>
<svg style="left:1194px;top:595px" width="13" height="12" viewBox="0 0 13 12"><path d="M4 2.4L9 6L4 9.6Z" fill="#e8e8e8"/></svg>
<div class="t" style="left:917.4px;top:624.8px;font-size:12.5px;color:#f0f1f2;transform:scaleX(0.966);transform-origin:0 0;">enter paint or fill mode to edit labels</div>
<svg style="left:1146px;top:626px" width="11" height="6" viewBox="0 0 11 6"><path d="M0.5 5.6L5.5 0.6L10.5 5.6Z" fill="#f0f1f2"/></svg>
<div class="t" style="left:1160.0px;top:624.8px;font-size:12.5px;color:#f0f1f2;transform:scaleX(0.989);transform-origin:0 0;">activity</div>
</div></body></html>
